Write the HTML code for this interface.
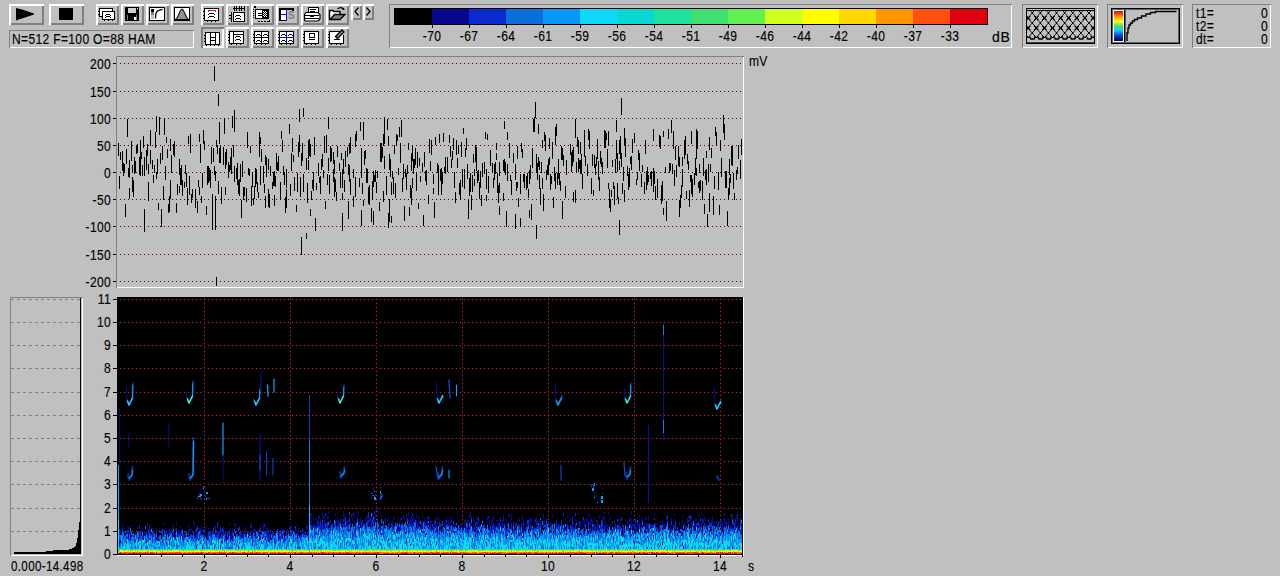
<!DOCTYPE html><html><head><meta charset="utf-8"><style>
*{margin:0;padding:0;box-sizing:border-box}
html,body{width:1280px;height:576px;overflow:hidden;background:#c0c0c0;font-family:"Liberation Sans",sans-serif;color:#000}
.btn{position:absolute;box-shadow:inset 2px 2px #fff,inset -2px -2px #808080}
.prs{box-shadow:inset 2px 2px #808080,inset -2px -2px #fff}
.sk{position:absolute;box-shadow:inset 1px 1px #808080,inset -1px -1px #fff}
.t{position:absolute;font-size:14px;line-height:13px;white-space:nowrap;-webkit-text-stroke:0.15px #000;letter-spacing:0.4px;transform:scaleX(0.86);transform-origin:0 0}
.r{transform-origin:100% 0;text-align:right}
.c{transform-origin:50% 0;text-align:center}
svg{position:absolute;left:0;top:0}
</style></head><body><svg width="1280" height="576" shape-rendering="crispEdges"><rect x="394" y="8" width="594" height="17" fill="#000"/><rect x="395" y="9" width="37" height="15" fill="#000000"/><rect x="432" y="9" width="37" height="15" fill="#08088f"/><rect x="469" y="9" width="37" height="15" fill="#0a2ccf"/><rect x="506" y="9" width="37" height="15" fill="#0a70d8"/><rect x="543" y="9" width="37" height="15" fill="#0a98f8"/><rect x="580" y="9" width="37" height="15" fill="#10d8f8"/><rect x="617" y="9" width="37" height="15" fill="#08d8d0"/><rect x="654" y="9" width="37" height="15" fill="#20e0a0"/><rect x="691" y="9" width="37" height="15" fill="#40e070"/><rect x="728" y="9" width="37" height="15" fill="#60f050"/><rect x="765" y="9" width="37" height="15" fill="#d0ff20"/><rect x="802" y="9" width="37" height="15" fill="#ffff00"/><rect x="839" y="9" width="37" height="15" fill="#ffd800"/><rect x="876" y="9" width="37" height="15" fill="#ff9800"/><rect x="913" y="9" width="37" height="15" fill="#ff5010"/><rect x="950" y="9" width="37" height="15" fill="#e00010"/><rect x="432" y="25" width="1" height="3" fill="#000"/><rect x="469" y="25" width="1" height="3" fill="#000"/><rect x="506" y="25" width="1" height="3" fill="#000"/><rect x="543" y="25" width="1" height="3" fill="#000"/><rect x="580" y="25" width="1" height="3" fill="#000"/><rect x="617" y="25" width="1" height="3" fill="#000"/><rect x="654" y="25" width="1" height="3" fill="#000"/><rect x="691" y="25" width="1" height="3" fill="#000"/><rect x="728" y="25" width="1" height="3" fill="#000"/><rect x="765" y="25" width="1" height="3" fill="#000"/><rect x="802" y="25" width="1" height="3" fill="#000"/><rect x="839" y="25" width="1" height="3" fill="#000"/><rect x="876" y="25" width="1" height="3" fill="#000"/><rect x="913" y="25" width="1" height="3" fill="#000"/><rect x="950" y="25" width="1" height="3" fill="#000"/><defs><pattern id="xh" x="1032.25" y="13" width="8.1" height="10" patternUnits="userSpaceOnUse"><path d="M-0.81 -1 L8.91 11 M8.91 -1 L-0.81 11" stroke="#000" stroke-width="1.0" fill="none"/></pattern></defs><rect x="1026" y="8" width="69" height="36" fill="#000"/><rect x="1027" y="9" width="67" height="34" fill="#c0c0c0"/><rect x="1027" y="42" width="67" height="1" fill="#404040"/><rect x="1027" y="10" width="67" height="1" fill="#000"/><rect x="1027" y="11" width="67" height="27" fill="url(#xh)" shape-rendering="auto"/><path d="M1030.0 37.5 L1031.0 39 L1034.0 39 L1035.0 37.5" stroke="#000" stroke-width="1.6" fill="none" shape-rendering="auto"/><path d="M1038.1 37.5 L1039.1 39 L1042.1 39 L1043.1 37.5" stroke="#000" stroke-width="1.6" fill="none" shape-rendering="auto"/><path d="M1046.2 37.5 L1047.2 39 L1050.2 39 L1051.2 37.5" stroke="#000" stroke-width="1.6" fill="none" shape-rendering="auto"/><path d="M1054.3 37.5 L1055.3 39 L1058.3 39 L1059.3 37.5" stroke="#000" stroke-width="1.6" fill="none" shape-rendering="auto"/><path d="M1062.4 37.5 L1063.4 39 L1066.4 39 L1067.4 37.5" stroke="#000" stroke-width="1.6" fill="none" shape-rendering="auto"/><path d="M1070.5 37.5 L1071.5 39 L1074.5 39 L1075.5 37.5" stroke="#000" stroke-width="1.6" fill="none" shape-rendering="auto"/><path d="M1078.6 37.5 L1079.6 39 L1082.6 39 L1083.6 37.5" stroke="#000" stroke-width="1.6" fill="none" shape-rendering="auto"/><path d="M1086.7 37.5 L1087.7 39 L1090.7 39 L1091.7 37.5" stroke="#000" stroke-width="1.6" fill="none" shape-rendering="auto"/><defs><linearGradient id="cm" x1="0" y1="0" x2="0" y2="1"><stop offset="0" stop-color="#e00010"/><stop offset="0.2" stop-color="#ffa000"/><stop offset="0.35" stop-color="#ffff00"/><stop offset="0.5" stop-color="#40e070"/><stop offset="0.65" stop-color="#10c8f8"/><stop offset="0.82" stop-color="#1040d0"/><stop offset="1" stop-color="#000060"/></linearGradient></defs><rect x="1111" y="8" width="69" height="36" fill="#000"/><rect x="1112" y="9" width="67" height="34" fill="#606060"/><rect x="1113" y="10" width="65" height="32" fill="#c0c0c0"/><rect x="1124" y="10" width="1" height="32" fill="#000"/><rect x="1125" y="10" width="1" height="32" fill="#606060"/><rect x="1113" y="10" width="11" height="32" fill="#fff"/><rect x="1114" y="11" width="9" height="30" fill="url(#cm)"/><path d="M1127 41 V33 H1128 V28 H1129 V25 H1130.5 V23 H1132.5 V21 H1134.5 V19.5 H1137.5 V18 H1141.5 V16 H1146 V14 H1150.5 V12.5 H1155.5 V11.5 H1176.5" stroke="#000" stroke-width="1.4" fill="none" shape-rendering="auto"/><rect x="113" y="63" width="4" height="1" fill="#000"/><rect x="118" y="63" width="624" height="1" fill="#d0b4b4"/><line x1="120" y1="63.5" x2="742" y2="63.5" stroke="#480808" stroke-dasharray="1 3"/><rect x="113" y="91" width="4" height="1" fill="#000"/><rect x="118" y="91" width="624" height="1" fill="#d0b4b4"/><line x1="120" y1="91.5" x2="742" y2="91.5" stroke="#480808" stroke-dasharray="1 3"/><rect x="113" y="118" width="4" height="1" fill="#000"/><rect x="118" y="118" width="624" height="1" fill="#d0b4b4"/><line x1="120" y1="118.5" x2="742" y2="118.5" stroke="#480808" stroke-dasharray="1 3"/><rect x="113" y="145" width="4" height="1" fill="#000"/><rect x="118" y="145" width="624" height="1" fill="#d0b4b4"/><line x1="120" y1="145.5" x2="742" y2="145.5" stroke="#480808" stroke-dasharray="1 3"/><rect x="113" y="172" width="4" height="1" fill="#000"/><rect x="118" y="172" width="624" height="1" fill="#d0b4b4"/><line x1="120" y1="172.5" x2="742" y2="172.5" stroke="#480808" stroke-dasharray="1 3"/><rect x="113" y="199" width="4" height="1" fill="#000"/><rect x="118" y="199" width="624" height="1" fill="#d0b4b4"/><line x1="120" y1="199.5" x2="742" y2="199.5" stroke="#480808" stroke-dasharray="1 3"/><rect x="113" y="226" width="4" height="1" fill="#000"/><rect x="118" y="226" width="624" height="1" fill="#d0b4b4"/><line x1="120" y1="226.5" x2="742" y2="226.5" stroke="#480808" stroke-dasharray="1 3"/><rect x="113" y="254" width="4" height="1" fill="#000"/><rect x="118" y="254" width="624" height="1" fill="#d0b4b4"/><line x1="120" y1="254.5" x2="742" y2="254.5" stroke="#480808" stroke-dasharray="1 3"/><rect x="113" y="281" width="4" height="1" fill="#000"/><rect x="118" y="281" width="624" height="1" fill="#d0b4b4"/><line x1="120" y1="281.5" x2="742" y2="281.5" stroke="#480808" stroke-dasharray="1 3"/><line x1="11" y1="531.5" x2="80" y2="531.5" stroke="#808080" stroke-dasharray="3 3"/><line x1="11" y1="508.5" x2="80" y2="508.5" stroke="#808080" stroke-dasharray="3 3"/><line x1="11" y1="484.5" x2="80" y2="484.5" stroke="#808080" stroke-dasharray="3 3"/><line x1="11" y1="461.5" x2="80" y2="461.5" stroke="#808080" stroke-dasharray="3 3"/><line x1="11" y1="438.5" x2="80" y2="438.5" stroke="#808080" stroke-dasharray="3 3"/><line x1="11" y1="415.5" x2="80" y2="415.5" stroke="#808080" stroke-dasharray="3 3"/><line x1="11" y1="392.5" x2="80" y2="392.5" stroke="#808080" stroke-dasharray="3 3"/><line x1="11" y1="368.5" x2="80" y2="368.5" stroke="#808080" stroke-dasharray="3 3"/><line x1="11" y1="345.5" x2="80" y2="345.5" stroke="#808080" stroke-dasharray="3 3"/><line x1="11" y1="322.5" x2="80" y2="322.5" stroke="#808080" stroke-dasharray="3 3"/><line x1="11" y1="299.5" x2="80" y2="299.5" stroke="#808080" stroke-dasharray="3 3"/><rect x="80" y="298" width="1" height="256" fill="#000"/><path d="M14 552 L46 552 L46 551 L60 550 L68 550 L73 548 L75 547 L77 542 L78 535 L79 525 L80 520 L80 554 L14 554 Z" fill="#000"/><path d="M0.5 0m118 143v13m1 20v13m1 -37v8m2 -9v20m1 -8v13m1 -12v9m1 31v13m1 -68v15m1 -45v18m1 31v9m1 -17v18m0 10v11m2 -58v20m1 4v7m0 5v15m1 -12v17m1 -40v17m1 -13v12m1 -27v8m1 -10v9m2 4v18m1 -35v20m0 -1v17m1 -24v7m1 6v11m1 -40v12m1 9v19m0 33v23m2 -82v20m1 -26v12m1 8v10m0 8v19m2 -71v16m0 4v14m2 -4v9m1 6v8m1 -18v8m1 -41v16m1 -32v16m0 40v7m1 -20v15m1 29v7m1 -93v18m1 18v11m1 45v18m1 -81v14m1 26v14m1 -81v16m1 31v14m1 -43v6m1 6v9m1 46v9m1 -17v16m1 -73v12m0 29v19m1 -44v18m2 -29v11m1 -14v16m2 46v10m1 -29v11m2 -36v16m0 11v7m1 -25v17m1 -20v10m0 -8v18m1 -5v15m0 -14v15m2 -14v6m1 -23v9m1 -1v14m1 1v17m1 -69v8m1 32v19m1 -61v19m1 41v9m1 -14v9m3 -9v19m2 -7v12m1 -33v7m1 -53v8m0 45v8m1 -51v19m1 33v7m1 -30v15m1 -58v14m1 -3v9m2 56v9m1 -49v19m1 -19v17m1 -15v13m1 -11v18m1 -41v17m1 30v36m1 -82v14m1 -96v15m0 85v9m1 -4v10m0 15v34m1 -90v7m0 130v9m1 -141v9m1 -60v12m0 75v13m1 -72v22m0 4v15m1 -18v18m1 24v17m2 -57v18m1 -47v16m1 18v17m0 18v8m1 -46v16m2 -3v16m1 -13v7m1 -15v13m1 -22v20m0 -11v17m1 -58v12m1 17v12m1 -47v22m0 34v16m2 -14v11m1 -16v17m0 -14v19m1 -5v14m1 -15v17m1 -32v18m1 18v18m1 -57v16m1 10v13m1 -13v9m2 -8v14m1 -70v16m1 20v7m1 -6v7m1 -30v7m1 33v20m1 -34v15m1 11v7m1 -19v13m1 -31v19m1 -18v15m1 -2v10m1 0v6m1 -66v18m0 -4v11m1 -20v7m0 22v19m1 -36v13m2 4v17m1 1v9m0 -8v7m1 -37v10m0 31v12m1 -51v20m2 -18v11m0 19v18m1 -13v14m1 -42v10m2 6v7m1 -17v14m1 -15v15m0 9v11m1 -30v11m1 -34v17m1 -8v9m1 -15v15m2 11v18m1 -69v8m1 1v12m1 14v9m1 -3v10m0 -7v10m1 12v16m1 -44v19m0 1v19m3 -84v10m1 50v12m1 -43v18m1 -33v14m1 3v7m1 15v14m2 14v7m1 -39v19m1 -50v15m1 -48v13m0 13v17m1 25v20m1 -44v13m0 71v18m1 -112v18m1 -53v9m0 57v18m3 -34v12m0 63v6m1 -56v20m1 -63v19m0 1v10m1 -31v17m1 -12v13m0 52v7m1 -25v9m1 -20v9m1 -17v17m0 -16v18m1 -54v18m1 63v13m1 -48v7m2 -27v13m1 1v6m1 -7v18m1 -35v11m1 -16v13m1 3v8m1 -42v17m0 -8v7m1 49v8m1 -74v18m1 21v11m1 -68v12m0 29v13m1 4v7m0 -6v18m1 -48v16m1 -14v13m2 -9v12m0 5v13m1 -22v14m0 3v20m1 -18v13m1 0v9m1 -55v11m2 6v8m1 1v16m1 -35v7m1 9v19m0 5v7m0 13v18m1 -72v15m1 6v12m1 -41v16m2 -20v10m1 7v11m0 26v18m1 -76v11m0 11v17m1 -45v16m0 26v16m3 -26v9m0 18v11m2 -73v13m0 30v20m1 -66v10m3 37v9m1 -65v9m1 17v20m0 -9v19m0 32v16m1 -43v11m1 -72v18m0 60v6m1 -55v14m1 -15v9m1 9v15m1 -14v14m1 4v17m1 -19v20m2 3v14m1 -41v19m1 -29v16m0 24v14m1 -50v7m1 -12v12m1 0v11m1 -22v7m2 24v9m1 -68v19m1 -19v19m1 -15v11m1 -24v12m0 45v11m1 -85v27m0 -23v10m0 25v13m2 7v19m1 -76v11m1 6v9m0 68v15m1 -74v16m0 29v23m1 -63v18m1 5v13m0 21v7m1 -52v8m1 -2v17m1 -49v9m1 29v15m1 -64v12m1 -11v6m1 27v7m1 -48v10m1 6v20m1 -43v17m1 41v14m1 -28v15m1 27v15m1 -52v8m1 -4v17m0 -12v12m1 -25v9m1 -31v7m1 57v9m1 -31v12m0 -9v10m1 -45v18m0 17v17m1 -59v15m0 17v10m1 -29v15m1 -15v9m1 -20v17m1 7v19m1 -39v16m1 35v6m1 -51v8m1 10v6m2 -19v9m1 43v11m1 -74v15m1 4v10m1 -11v15m2 10v9m1 -65v14m1 8v10m1 -31v15m2 19v10m0 4v6m1 8v16m1 -81v8m2 18v10m1 -8v18m0 -1v13m1 -61v9m1 26v12m0 -10v10m1 -13v16m0 -4v15m1 -23v12m1 -51v9m1 25v6m1 -16v17m2 -17v15m2 -37v8m1 3v11m1 2v9m1 -17v9m1 -22v12m1 22v16m1 4v11m1 -63v15m1 3v10m1 -23v9m1 29v12m1 -15v20m1 -58v15m1 12v18m1 -59v6m1 35v20m1 -41v9m1 -19v12m1 14v15m1 21v19m1 -41v18m1 -23v19m1 3v15m1 -35v17m1 -38v9m1 6v7m0 3v7m1 -41v17m1 -15v18m0 -3v9m1 0v12m1 -13v11m1 1v17m1 -28v17m1 7v11m1 -43v14m2 -15v12m1 -42v7m1 30v20m0 6v6m1 -67v6m1 36v17m2 -43v16m2 -3v9m1 6v10m1 -24v8m0 -6v14m1 -18v12m1 -31v7m0 3v7m1 13v20m1 -8v18m1 -41v14m0 7v10m0 13v9m4 -55v11m0 22v8m1 -80v8m0 30v13m1 -10v13m1 36v16m1 -95v8m0 24v17m2 -38v15m1 17v6m1 -1v15m2 -42v10m2 1v16m0 34v15m1 -47v9m1 -45v13m0 23v6m1 10v9m2 -33v20m0 24v9m1 -84v9m1 -3v9m1 16v8m1 -8v14m2 -12v14m1 -17v15m1 1v9m1 -28v14m0 26v8m1 -53v14m1 25v16m1 -72v20m1 -49v13m1 -15v15m1 -30v16m1 36v19m0 52v14m1 -76v17m1 -56v10m0 23v10m1 -6v9m0 5v14m1 -1v17m1 -43v11m1 -33v8m0 30v11m1 5v17m1 -79v9m1 -6v16m1 19v10m1 -15v10m1 -16v16m1 -37v11m0 8v8m1 9v16m1 -14v8m1 -42v17m1 38v11m1 -41v14m1 -54v18m0 28v16m1 -65v12m1 37v12m1 -26v20m1 -6v12m1 -4v10m1 -45v14m1 -12v12m0 41v18m1 -64v11m2 20v12m1 -38v15m4 -31v11m1 -3v20m1 -22v16m1 -19v15m0 30v10m2 -83v19m0 52v13m1 -41v11m1 -36v10m1 -7v14m0 4v14m1 -12v9m1 -27v12m0 6v14m1 -20v20m1 0v15m2 -59v16m0 -6v17m1 -1v10m2 -2v12m1 -47v11m1 -9v18m2 29v16m1 -40v12m1 24v6m1 -41v13m1 -4v11m1 -18v9m1 -27v20m1 2v19m1 -3v14m1 -40v13m1 -6v9m1 -5v12m2 -44v18m1 -17v17m1 -15v7m1 9v19m1 -37v14m0 38v6m1 0v19m1 -9v13m1 -22v7m1 -37v7m1 15v7m1 -3v19m1 -46v14m1 -53v12m0 8v19m1 -6v19m0 11v16m1 -2v7m1 -64v14m0 7v9m0 50v15m1 -99v10m0 0v13m1 -61v17m0 38v14m1 16v11m1 -27v14m1 -53v17m0 45v12m1 -64v19m2 9v10m1 -2v16m1 -22v19m1 -30v7m1 -8v14m1 -31v14m2 -20v10m2 36v6m1 -13v8m1 -30v10m1 -7v18m2 3v13m1 -22v7m2 10v12m1 -54v14m1 17v19m1 -23v18m1 -10v7m2 -10v7m1 -8v15m2 -57v12m0 27v11m0 0v13m1 -21v13m1 2v14m2 -21v19m2 -63v12m1 -11v13m1 36v19m1 -23v20m1 -70v6m0 71v7m2 -48v6m1 28v20m2 -92v10m1 24v10m1 -10v8m1 -51v13m1 31v10m1 -43v18m1 21v16m1 -40v14m1 5v12m2 -31v20m1 -9v10m0 33v17m1 -22v13m1 -23v13m1 -41v9m0 3v18m2 -47v19m1 -23v19m0 -18v15m1 39v8m1 -45v10m1 -3v9m1 20v17m1 -32v7m1 -51v13m0 31v19m1 -15v18m2 -24v12m1 -27v17m1 -46v21m0 0v9m0 9v8m1 -45v18m1 33v6m1 -24v9m0 8v12m1 -13v11m2 -10v19m1 -42v18m1 28v10m1 -44v10m1 -29v7m0 11v16m1 29v13m1 -63v13m0 -10v15m1 -45v13m0 43v19m1 -48v8m1 -24v10m2 38v19m1 -39v13m1 -62v9m1 -4v13m2 27v18m1 15v10m1 -75v11m1 7v19m2 -62v18m1 -9v16m1 31v17m1 -17v17m1 23v15m1 -38v11m1 -40v16m0 3v17m1 -21v9m1 -37v19m1 -19v20m1 7v16m1 4v7m2 -30v10m1 -13v7m1 -29v14m2 1v19m1 -40v16" stroke="#000" stroke-width="1" fill="none"/><rect x="117" y="297" width="626" height="258" fill="#000"/><rect x="743" y="297" width="1" height="259" fill="#fff"/><rect x="117" y="555" width="627" height="1" fill="#fff"/><rect x="113" y="554" width="4" height="1" fill="#000"/><rect x="113" y="531" width="4" height="1" fill="#000"/><rect x="118" y="531" width="624" height="1" fill="#220000"/><line x1="120" y1="531.5" x2="742" y2="531.5" stroke="#a03838" stroke-dasharray="1 3"/><rect x="113" y="508" width="4" height="1" fill="#000"/><rect x="118" y="508" width="624" height="1" fill="#220000"/><line x1="120" y1="508.5" x2="742" y2="508.5" stroke="#a03838" stroke-dasharray="1 3"/><rect x="113" y="484" width="4" height="1" fill="#000"/><rect x="118" y="484" width="624" height="1" fill="#220000"/><line x1="120" y1="484.5" x2="742" y2="484.5" stroke="#a03838" stroke-dasharray="1 3"/><rect x="113" y="461" width="4" height="1" fill="#000"/><rect x="118" y="461" width="624" height="1" fill="#220000"/><line x1="120" y1="461.5" x2="742" y2="461.5" stroke="#a03838" stroke-dasharray="1 3"/><rect x="113" y="438" width="4" height="1" fill="#000"/><rect x="118" y="438" width="624" height="1" fill="#220000"/><line x1="120" y1="438.5" x2="742" y2="438.5" stroke="#a03838" stroke-dasharray="1 3"/><rect x="113" y="415" width="4" height="1" fill="#000"/><rect x="118" y="415" width="624" height="1" fill="#220000"/><line x1="120" y1="415.5" x2="742" y2="415.5" stroke="#a03838" stroke-dasharray="1 3"/><rect x="113" y="392" width="4" height="1" fill="#000"/><rect x="118" y="392" width="624" height="1" fill="#220000"/><line x1="120" y1="392.5" x2="742" y2="392.5" stroke="#a03838" stroke-dasharray="1 3"/><rect x="113" y="368" width="4" height="1" fill="#000"/><rect x="118" y="368" width="624" height="1" fill="#220000"/><line x1="120" y1="368.5" x2="742" y2="368.5" stroke="#a03838" stroke-dasharray="1 3"/><rect x="113" y="345" width="4" height="1" fill="#000"/><rect x="118" y="345" width="624" height="1" fill="#220000"/><line x1="120" y1="345.5" x2="742" y2="345.5" stroke="#a03838" stroke-dasharray="1 3"/><rect x="113" y="322" width="4" height="1" fill="#000"/><rect x="118" y="322" width="624" height="1" fill="#220000"/><line x1="120" y1="322.5" x2="742" y2="322.5" stroke="#a03838" stroke-dasharray="1 3"/><rect x="113" y="299" width="4" height="1" fill="#000"/><rect x="118" y="299" width="624" height="1" fill="#220000"/><line x1="120" y1="299.5" x2="742" y2="299.5" stroke="#a03838" stroke-dasharray="1 3"/><rect x="204" y="298" width="1" height="256" fill="#220000"/><line x1="204.5" y1="299" x2="204.5" y2="554" stroke="#a03838" stroke-dasharray="1 3"/><rect x="290" y="298" width="1" height="256" fill="#220000"/><line x1="290.5" y1="299" x2="290.5" y2="554" stroke="#a03838" stroke-dasharray="1 3"/><rect x="376" y="298" width="1" height="256" fill="#220000"/><line x1="376.5" y1="299" x2="376.5" y2="554" stroke="#a03838" stroke-dasharray="1 3"/><rect x="462" y="298" width="1" height="256" fill="#220000"/><line x1="462.5" y1="299" x2="462.5" y2="554" stroke="#a03838" stroke-dasharray="1 3"/><rect x="548" y="298" width="1" height="256" fill="#220000"/><line x1="548.5" y1="299" x2="548.5" y2="554" stroke="#a03838" stroke-dasharray="1 3"/><rect x="634" y="298" width="1" height="256" fill="#220000"/><line x1="634.5" y1="299" x2="634.5" y2="554" stroke="#a03838" stroke-dasharray="1 3"/><rect x="720" y="298" width="1" height="256" fill="#220000"/><line x1="720.5" y1="299" x2="720.5" y2="554" stroke="#a03838" stroke-dasharray="1 3"/><path d="M0.5 0m118 527v2m0 0v3m0 2v2m1 5v3m1 -14v3m0 7v3m1 -12v4m1 -11v4m1 2v2m1 2v2m1 -3v2m1 -5v2m0 0v2m1 -8v2m1 -1v3m0 2v4m0 0v3m1 -13v3m1 3v2m0 0v2m0 0v4m1 -15v2m0 3v2m0 3v2m4 -5v3m2 -9v3m1 8v2m1 -5v2m2 -6v4m0 0v2m1 -8v4m2 1v3m1 -3v2m1 4v4m1 -20v3m0 0v4m0 4v3m1 0v2m1 -14v3m0 0v3m1 -1v3m1 -1v3m2 -7v2m0 0v3m1 -3v3m2 -6v4m0 6v3m1 -3v4m1 -11v2m0 7v2m5 -12v3m1 -9v3m1 3v3m0 0v2m1 -1v4m0 0v3m2 -11v4m0 0v2m1 -6v2m0 0v2m2 -2v2m1 -6v3m1 -5v4m0 6v2m1 -2v2m1 -9v3m0 4v2m1 -15v4m1 7v4m1 -7v3m1 -2v4m1 -9v2m0 2v4m2 2v2m1 0v2m1 -7v3m0 0v2m1 -3v2m2 -5v3m0 5v2m1 -18v4m0 2v2m0 3v2m2 -9v2m1 -1v3m2 -11v4m1 -2v3m0 5v4m1 -6v3m0 0v3m1 -2v2m1 -5v2m0 0v2m1 -6v2m0 0v2m1 -5v4m2 -5v3m3 -1v2m0 3v3m1 -6v4m0 0v3m1 -11v3m1 3v3m0 0v3m1 -10v2m0 0v2m2 -2v2m3 -1v3m1 -9v3m1 -2v3m0 4v4m1 -5v3m1 -5v2m0 0v2m2 -4v2m0 0v2m2 -5v4m2 -6v3m1 1v2m0 0v2m1 1v2m1 -4v3m1 -8v3m0 6v2m1 -7v3m0 0v2m1 -15v3m0 3v2m0 0v2m1 -5v3m0 3v3m0 0v2m1 -7v2m0 0v2m0 0v4m1 -11v3m0 3v3m0 0v3m2 -18v3m1 -3v4m0 0v2m2 -1v4m1 1v3m3 -4v3m0 0v4m1 -15v2m0 6v4m0 0v2m1 -6v2m0 0v3m2 -10v4m0 4v2m1 -7v2m2 -1v3m0 2v2m1 -6v4m1 -12v4m0 2v2m1 -8v2m0 5v2m0 0v3m1 5v2m1 -14v4m1 -5v2m0 0v3m1 -4v4m2 -4v3m1 -2v3m1 -5v2m0 4v2m0 0v2m0 0v3m1 -17v4m0 8v4m1 -9v4m1 -9v2m0 9v2m1 -16v3m0 0v2m0 0v4m2 4v4m1 -16v2m0 3v3m1 -4v2m0 0v3m0 0v2m1 -2v4m2 -5v2m0 0v2m0 0v4m1 -11v2m0 7v2m1 -13v2m0 7v2m1 -4v2m1 -7v3m4 0v2m0 0v4m0 0v3m1 -4v2m2 -10v4m1 -6v4m0 3v2m0 0v3m3 -9v4m0 0v2m1 -7v3m1 -3v2m0 0v2m2 0v3m1 -14v2m1 1v2m0 7v2m2 4v2m1 -16v2m0 2v3m1 -4v3m0 0v3m1 -11v2m0 4v4m1 -3v3m0 0v3m0 0v2m1 -12v3m0 0v4m3 -2v3m1 -3v2m1 -4v4m1 -3v4m2 -9v4m1 -5v4m0 5v2m1 -7v4m0 0v2m0 2v4m1 -16v2m1 -11v2m0 3v2m0 0v2m1 -12v2m0 2v3m0 0v3m0 4v3m1 -4v4m1 -12v4m1 0v4m1 -8v2m1 -1v2m0 0v4m0 0v2m1 -6v2m0 0v2m1 -11v3m0 0v4m0 3v3m1 -11v3m0 4v3m1 -7v2m1 3v2m0 0v3m0 0v3m1 -19v3m1 -1v3m0 0v2m0 0v2m0 3v4m1 -13v2m0 0v3m0 0v3m0 0v4m2 -2v2m1 -12v3m1 -8v3m0 2v4m1 1v3m0 0v4m1 -3v3m5 -14v3m0 2v2m1 -1v3m1 -5v3m0 0v4m1 -5v2m0 3v2m2 -8v2m1 -3v3m2 -10v4m0 0v2m1 -3v4m0 0v3m0 0v4m1 0v2m1 -13v2m0 5v3m0 0v2m1 -6v3m0 0v2m1 -7v4m0 0v4m0 4v2m1 -10v2m1 -2v2m0 0v4m1 -14v3m1 -4v3m0 2v3m1 -8v3m0 0v2m0 3v2m2 -9v3m0 5v2m0 0v3m0 0v4m1 -21v3m1 2v4m1 -8v4m0 4v4m0 0v3m1 -5v4m0 2v3m1 -13v4m0 0v3m0 2v2m1 -8v2m0 4v2m1 -6v3m0 0v2m1 -17v2m0 10v2m1 -1v2m1 -8v4m0 5v3m1 -12v2m0 2v2m1 -8v2m0 0v4m1 -3v2m0 3v4m1 -9v4m1 -1v2m0 0v4m1 -8v3m1 -9v4m0 0v2m0 4v4m2 -16v4m0 2v3m0 0v2m1 -13v3m0 2v4m0 2v2m0 8v2m1 -8v4m0 0v2m1 -19v2m0 3v3m1 8v2m1 -6v2m1 0v3m1 -13v4m0 4v3m1 -6v4m2 1v3m1 -8v2m0 0v3m0 2v2m2 -10v3m1 -6v3m1 2v3m0 0v2m0 0v4m3 -9v3m1 -8v4m0 7v3m1 -5v2m3 -9v3m0 6v4m1 -6v2m0 0v2m0 0v2m1 -10v3m0 3v2m0 0v3m1 -14v4m0 2v3m0 2v2m1 -8v2m2 -10v2m1 2v2m1 11v2m1 -16v3m0 10v2m1 -9v3m1 -15v4m0 3v3m2 -5v3m0 0v2m1 -7v3m0 0v3m0 0v4m0 0v2m1 -8v4m0 0v2m0 2v2m1 -13v4m0 0v4m0 0v2m1 -8v4m2 -7v3m0 2v2m0 0v3m0 0v3m1 -6v3m0 0v4m1 -8v3m0 0v2m1 -6v4m1 2v2m1 -7v4m0 0v4m0 0v3m1 -17v3m0 3v3m0 2v3m0 2v2m2 -16v4m0 0v2m0 4v2m1 -7v4m0 8v3m1 -15v4m0 7v2m1 -18v3m0 0v2m0 0v4m1 -3v2m0 2v2m1 -11v2m0 2v3m1 -4v3m1 -4v4m1 3v2m1 -6v3m0 2v2m1 -10v3m0 0v4m1 -9v3m0 2v2m0 0v3m1 -12v4m1 2v3m1 -9v4m1 -1v4m1 3v4m2 -4v3m1 -9v3m0 8v3m1 -12v4m1 -6v3m1 -6v3m0 3v2m2 -5v3m0 0v3m1 -3v3m0 0v4m0 3v2m0 0v2m1 -20v4m0 0v3m1 -4v3m1 -7v2m0 5v2m0 0v3m1 -4v3m0 4v2m1 -9v3m1 -3v3m1 -2v3m1 -16v3m0 12v4m1 -12v3m1 4v2m1 -5v2m0 0v3m1 -4v4m1 -12v2m0 9v3m1 -3v3m1 -10v4m0 0v4m1 -9v4m0 4v2m1 -8v2m1 -3v2m0 0v2m0 4v2m2 -15v4m0 0v2m1 -9v4m0 0v2m0 4v4m1 -10v3m0 4v3m1 1v4m1 -13v4m0 3v4m1 -9v2m0 3v4m0 0v3m1 -6v4m0 0v2m0 2v3m1 -21v4m1 -2v4m0 0v3m0 0v2m1 -7v4m0 6v3m1 -14v2m0 3v2m1 4v2m1 -15v2m0 8v2m0 0v4m1 -14v2m4 -5v3m0 5v3m1 -9v4m0 0v3m1 2v3m1 -11v4m0 0v3m0 2v3m2 -11v2m0 0v4m1 -9v2m0 0v3m0 0v2m1 -8v4m1 4v4m0 0v2m0 0v3m1 -8v3m1 -8v2m1 1v2m0 0v2m1 -7v4m0 0v3m0 0v2m1 -2v3m1 -13v2m0 2v2m0 0v4m1 -2v2m0 0v2m1 -9v3m0 0v3m0 0v2m1 -13v4m0 5v4m1 -6v3m1 -6v2m0 4v2m0 0v3m1 -10v2m0 13v4m1 -5v2m1 -22v3m0 4v3m1 -10v4m0 6v4m0 3v2m2 -19v3m0 0v3m0 2v2m0 9v2m1 -9v2m2 0v2m0 3v2m1 -13v3m0 3v3m1 -10v3m2 -1v2m1 -7v4m0 2v2m0 7v3m1 -9v3m1 -8v2m1 -9v4m0 0v2m0 9v3m1 -13v2m0 4v3m0 0v3m0 0v2m0 0v4m1 -9v2m1 -4v2m0 0v3m1 -11v4m0 0v3m1 -4v3m1 2v4m1 -15v2m0 0v2m0 0v3m1 -7v3m0 0v2m0 0v3m1 -9v3m0 0v2m0 3v2m3 -6v3m0 0v3m2 -10v3m0 0v3m1 0v2m2 -11v2m0 5v3m0 0v4m0 6v2m1 -16v4m2 8v2m1 -20v4m0 3v4m1 -5v3m1 -5v2m2 1v3m3 -1v2m0 0v2m0 3v3m1 -10v2m1 -12v4m1 7v3m1 -6v3m1 5v3m1 -12v2m1 3v2m2 -3v3m1 5v3m4 -11v3m0 0v3m1 -12v3m1 3v3m0 0v2m0 4v2m1 -19v3m0 2v4m1 0v4m1 -10v4m1 -6v4m0 7v2m2 -5v2m1 -12v3m0 4v2m0 0v2m0 0v2m1 0v2m1 -11v2m1 -1v3m0 2v2m2 -14v2m0 5v4m0 0v4m1 -4v4m1 -6v2m0 0v3m2 -10v2m0 2v3m0 2v3m1 -9v2m1 -3v2m0 0v4m0 5v3m2 -15v3m0 3v3m1 -9v4m0 0v3m1 -12v4m0 14v3m1 -12v3m1 -9v3m0 0v4m0 0v2m1 -6v3m0 0v4m1 -5v3m2 -7v2m0 7v3m1 -4v2m2 -7v2m0 0v2m0 2v2m1 -4v3m0 0v3m0 5v2m1 -22v4m0 9v2m1 -3v2m2 -11v3m1 -5v3m0 5v2m1 -14v2m0 3v3m0 0v4m1 -1v4m0 0v3m0 0v2m1 -8v3m1 -2v3m1 -16v3m0 4v2m0 5v4m1 -5v2m1 -11v4m0 4v2m3 12v3m1 -21v4m1 -2v4m1 0v3m2 -10v3m0 2v2m1 -3v3m1 -8v3m1 12v3m1 -7v2m1 -7v2m1 2v3m0 0v2m1 -14v2m1 6v3m1 -10v4m0 0v3m2 -6v4m1 -8v3m0 3v2m0 3v3m1 -20v4m0 4v2m0 0v2m0 0v3m1 -2v4m1 -8v2m1 0v3m1 4v2m0 0v3m1 -13v2m0 4v3m1 -8v4m0 0v2m0 9v2m1 -20v2m0 2v4m0 0v3m1 -15v4m0 3v3m1 -1v2m0 0v2m0 0v4m1 -12v3m0 0v2m1 -7v2m0 0v2m0 3v3m1 -9v2m1 1v2m0 0v3m0 3v3m1 -16v3m0 7v3m1 -12v2m0 6v3m1 -6v4m0 0v2m0 7v2m1 -22v3m0 0v2m0 7v3m2 -4v2m1 -5v4m2 3v2m1 -20v3m0 6v2m1 -1v3m1 -9v2m1 4v2m0 2v2m2 -4v2m0 0v2m0 0v3m1 -11v3m0 0v2m2 -6v2m0 0v3m0 8v3m0 6v3m1 -21v3m0 0v2m1 -6v2m0 0v4m2 -13v4m0 2v3m1 -6v2m1 0v2m1 -2v3m0 0v2m1 -2v3m0 0v4m1 -13v3m2 -7v2m1 2v2m0 2v4m0 0v3m2 -2v4m1 2v3m1 -8v3m1 -9v3m0 6v2m1 -2v2m1 -11v3m0 0v4m0 3v4m1 -20v2m0 2v3m0 9v2m1 -5v2m0 15v3m1 -24v2m2 -2v2m0 0v3m1 -12v3m1 -5v2m2 1v2m0 0v3m0 0v2m0 0v2m1 -12v3m0 4v3m0 5v3m1 -12v2m2 5v2m1 -14v3m0 0v2m0 3v3m0 0v3m1 -12v2m0 14v3m1 -12v2m1 -14v3m0 8v3m1 -5v3m0 4v2m1 -11v4m0 0v2m1 -14v2m0 8v3m1 -4v2m1 -9v2m0 2v4m1 -6v3m0 13v2m1 -17v3m1 3v2m0 0v3m1 -1v2m2 -9v3m0 6v4m1 -17v2m1 1v3m0 6v2m1 -15v4m0 0v3m1 -1v4m1 -5v2m1 2v4m1 -10v3m0 0v2m0 6v2m2 -5v3m1 -9v3m1 -2v2m1 -3v2m0 0v2m1 -4v4m0 0v3m0 0v4m1 -14v3m1 -8v4m0 2v3m0 0v3m0 0v2m1 -7v4m0 0v2m0 0v2m2 -2v3m1 -10v3m0 0v3m1 -4v2m1 1v4m1 -12v2m0 8v3m1 -15v4m0 5v3m0 0v3m1 -10v3m1 9v2m1 -10v4m1 -12v4m0 2v2m0 2v3m1 -12v2m0 11v4m1 -11v4m1 1v4m1 -17v2m0 14v2m1 -8v2" stroke="#08088f" stroke-width="1" fill="none"/><path d="M0.5 0m118 536v2m0 0v2m1 -11v3m0 0v3m0 3v3m0 3v3m3 -19v4m1 4v3m3 -3v3m0 2v3m1 -14v4m0 3v2m2 -7v2m0 5v2m4 -6v3m1 -4v3m0 3v3m1 -4v2m1 -7v3m2 -6v3m0 5v3m1 -17v4m0 2v3m0 2v3m1 -8v3m0 0v2m0 0v3m1 7v3m1 -13v4m1 -4v2m1 -7v2m1 2v4m1 -7v3m2 -6v3m0 0v2m0 0v3m1 -6v4m0 3v2m1 -7v3m0 2v2m2 -8v4m0 0v3m0 0v4m1 -10v4m2 -2v4m0 0v3m3 -6v3m1 -9v3m0 2v2m0 2v2m1 -10v2m1 -3v4m1 -5v3m0 0v4m0 4v3m1 -8v2m1 -7v4m2 -3v2m0 9v2m3 -11v3m0 5v4m1 -15v4m0 4v2m2 -10v3m0 2v3m1 -6v3m1 2v2m1 -6v2m0 2v3m1 -12v4m2 1v4m2 -3v2m0 0v4m1 -10v4m0 0v2m1 -2v2m0 2v3m1 -7v4m0 2v3m2 -12v4m1 -4v2m2 -1v3m1 -6v2m0 5v3m1 -5v2m1 -2v3m0 0v4m1 -6v4m1 -7v4m0 3v2m1 -6v4m2 -11v3m0 4v3m0 0v3m0 4v4m1 -23v4m0 4v3m0 0v3m1 -1v2m1 -7v2m0 0v4m1 -11v4m0 0v3m0 5v3m2 -14v2m0 13v4m1 -19v2m0 2v3m0 2v2m1 -11v3m0 3v2m2 0v3m0 0v2m0 0v2m2 -13v4m0 0v4m1 -9v3m0 0v2m0 3v3m1 -10v4m0 0v2m1 -3v4m0 0v3m0 0v2m1 -12v2m1 -6v3m1 1v3m0 11v3m1 -20v4m1 2v3m1 -16v3m0 0v3m0 6v3m1 -5v3m0 0v3m0 0v2m1 -6v2m1 -9v3m0 0v3m0 3v2m0 7v4m1 -16v2m0 0v3m1 -10v2m0 0v2m0 3v4m0 2v3m1 -14v3m0 0v3m1 3v3m1 -10v4m0 2v3m1 -2v4m1 -11v4m0 0v2m1 -7v2m1 0v3m0 11v2m1 -10v3m2 -10v3m1 1v2m1 -9v4m0 10v2m3 -11v3m1 -9v3m0 15v3m1 -22v3m0 2v2m0 0v2m0 6v2m1 -12v2m0 0v2m0 0v2m3 -1v4m0 0v2m2 -10v2m1 0v2m1 -6v3m1 0v2m2 -4v4m1 -10v2m0 8v3m1 -4v3m0 0v3m0 2v3m2 -13v4m1 -1v3m1 -3v3m1 -3v2m1 -5v3m1 -6v2m0 15v2m1 -21v3m0 3v2m1 5v3m2 -10v4m1 -14v3m0 4v3m1 -3v3m1 -2v2m0 0v3m0 3v3m1 -8v2m0 0v3m1 -10v3m0 4v3m1 -6v2m0 0v4m0 0v3m1 -13v2m2 1v3m1 -4v2m1 4v3m0 0v2m1 -10v3m0 4v4m1 -13v2m1 -4v2m2 0v4m0 0v2m1 -5v2m0 2v4m0 0v2m1 -9v4m0 0v2m2 -9v3m0 0v2m0 4v4m1 -6v2m0 0v3m1 -4v3m1 -9v2m0 0v3m0 10v2m1 -14v4m2 -12v2m0 10v3m1 -15v3m0 2v4m1 -6v2m0 0v2m1 -3v3m1 3v3m2 -14v3m0 9v2m2 7v2m1 -15v2m1 0v2m0 9v2m1 -14v2m0 0v3m1 -5v2m0 3v3m1 -15v4m1 2v3m2 -5v3m0 0v3m2 -6v2m1 1v2m1 -16v2m0 4v4m1 -17v2m0 9v2m1 -2v2m1 9v2m1 -13v3m1 -2v4m0 0v4m0 0v3m1 -10v2m0 3v3m0 8v2m1 -18v2m0 3v3m1 -10v3m1 -7v3m0 5v3m0 0v3m1 -9v3m0 7v3m1 -18v4m0 0v3m0 0v2m1 14v3m1 -27v3m0 0v4m0 0v2m0 3v2m2 -6v2m1 -17v3m0 7v2m0 2v4m1 -8v3m1 -4v3m0 0v4m1 -1v2m0 2v2m0 0v2m1 -8v2m0 0v4m1 -13v2m0 5v3m1 -7v2m1 -2v2m0 0v4m0 0v4m1 -7v3m1 -6v4m1 -7v3m0 0v2m1 0v4m1 -5v2m0 0v3m1 -8v3m1 -2v3m0 0v4m0 0v3m1 -12v4m1 0v2m1 -4v2m0 9v3m1 -18v3m0 2v3m0 3v3m1 -8v3m1 -11v3m0 0v2m1 20v3m1 -20v2m0 0v4m1 -5v4m1 -18v3m0 3v4m0 7v2m1 -3v4m0 3v3m2 -7v3m0 0v3m0 0v3m1 -6v2m1 -8v3m0 0v3m1 -3v3m0 0v3m0 3v4m0 3v2m2 -30v3m0 4v3m1 -3v4m1 0v4m0 0v3m2 -15v4m0 6v4m1 -16v2m1 2v2m0 5v3m3 -8v4m0 0v3m1 -12v3m0 0v3m1 -15v3m0 0v3m0 2v3m1 8v2m1 -15v3m0 6v3m1 -8v4m0 0v3m1 -10v4m1 -4v3m0 0v2m0 0v2m1 11v2m2 -6v2m0 0v2m1 -29v3m0 8v3m1 9v2m0 0v2m1 -7v3m1 -3v4m0 0v3m1 -7v2m0 3v2m1 -6v2m0 2v2m1 -11v2m0 0v2m0 0v3m0 0v2m0 0v2m0 0v2m2 -19v2m2 7v3m1 -7v3m0 0v3m0 9v3m1 2v3m2 -23v4m1 -3v4m0 0v2m0 0v2m2 -1v3m1 -12v4m1 -2v2m0 4v3m1 -8v2m0 4v3m1 3v2m2 -12v2m1 -11v2m0 8v2m1 -7v2m1 -8v2m0 6v3m0 0v3m1 -4v3m0 0v3m2 -19v2m0 12v3m0 8v4m1 -25v3m1 3v2m0 0v4m0 0v3m0 0v2m1 -13v3m0 0v2m0 3v3m1 -9v2m0 18v2m2 -33v3m0 9v2m0 2v3m3 -12v3m0 4v2m0 0v3m0 0v3m0 0v4m1 -11v3m2 -14v2m0 7v3m1 8v2m1 -11v2m2 -6v2m1 5v2m1 -10v4m0 4v2m2 11v2m1 -20v2m1 -12v3m1 8v3m1 -6v2m0 0v2m0 0v3m1 -2v3m1 -8v3m0 2v2m1 -5v2m0 2v4m1 -7v2m1 1v3m1 -7v3m0 0v3m0 11v2m1 -18v2m0 3v2m0 0v2m2 -13v4m0 3v3m0 0v2m0 3v2m1 -17v3m1 -2v2m1 -5v2m0 0v3m0 3v3m2 -6v2m1 4v2m0 0v3m1 -17v3m0 7v3m1 -9v3m0 2v2m0 2v3m2 5v3m1 -18v2m0 0v2m1 0v2m1 -4v4m1 -11v3m1 3v2m0 2v4m1 -4v2m1 -2v2m1 0v2m1 -7v2m1 -2v3m0 13v2m1 -18v2m0 0v2m0 2v2m2 -6v3m1 4v3m2 -11v3m1 -5v3m0 0v3m1 -9v4m0 2v3m1 -4v2m0 0v3m0 0v3m1 -11v3m0 0v2m1 -5v3m2 9v4m1 -13v3m2 -10v4m1 -4v2m0 2v4m0 0v4m1 -7v2m0 0v3m0 0v4m1 -19v3m1 6v3m0 3v2m3 -8v2m1 -3v2m1 -2v3m0 7v3m1 -10v3m0 2v2m1 -4v2m0 9v2m2 -28v2m0 14v2m1 -1v3m1 -11v4m0 0v3m0 0v2m0 0v4m1 -9v4m0 11v3m1 -21v3m0 0v2m0 0v3m1 -11v3m0 0v2m0 0v2m2 -2v3m0 3v4m1 -12v2m0 3v2m1 -3v2m2 -9v4m0 5v2m1 -15v2m0 10v3m1 -5v3m1 0v3m1 -16v2m0 10v3m2 -4v3m0 0v3m1 -7v3m0 0v3m1 -12v3m0 2v4m1 -3v3m1 -4v3m2 -7v4m0 0v2m1 1v3m1 -12v4m0 3v4m1 -3v3m0 2v2m1 -12v3m1 -4v2m0 3v2m0 0v3m0 2v3m2 -14v2m0 2v2m0 0v3m0 0v3m1 -11v4m1 0v2m0 0v3m1 -11v3m0 6v3m1 0v2m1 -16v4m2 6v2m1 -6v3m1 -11v4m1 -4v2m0 0v4m1 3v3m0 0v4m1 -10v3m0 6v2m1 -10v3m1 -2v2m1 -1v3m0 0v3m1 -8v3m0 2v2m0 0v3m1 -18v3m0 6v3m1 -8v2m0 2v2m1 -8v2m0 2v4m0 3v3m0 2v3m1 -15v2m0 0v2m1 -1v4m0 0v2m0 2v2m1 -14v2m0 4v3m0 0v2m2 -6v3m1 -7v3m1 4v2m1 -10v4m0 0v4m1 -13v4m0 0v4m0 0v3m2 -8v4m1 2v3m2 -6v2m0 0v3m0 0v3m2 0v2m0 0v2m0 0v2m1 -10v4m1 -1v3m1 -13v2m0 0v4m1 -1v2m0 7v2m1 -14v3m0 0v2m0 0v2m1 -4v3m0 0v3m2 -13v3m0 0v3m0 0v3m0 2v2m1 -7v3m1 -16v3m0 12v3m1 -1v2m1 -3v2m0 6v3m2 -15v3m2 1v3m1 -7v3m0 2v3m1 -7v3m1 -11v4m0 0v3m0 2v4m0 0v4m1 -7v3m2 -18v3m0 8v3m0 0v2m1 2v2m0 9v3m1 -17v4m0 0v3m0 0v2m1 -4v2m1 -13v2m0 10v3m1 -7v3m1 0v3m1 6v3m1 -28v3m0 8v3m0 0v2m0 0v2m1 -10v2m0 6v3m1 -12v3m0 0v4m2 1v4m1 -14v3m0 0v2m0 0v2m1 0v4m0 2v3m1 -11v2m0 0v3m0 0v2m1 -3v2m1 -7v4m0 0v2m0 3v2m1 -12v2m1 -3v2m0 3v3m1 -5v4m0 0v3m1 -14v2m1 2v2m0 2v3m1 -1v2m1 -2v3m1 -8v2m0 4v2m1 -13v4m0 0v3m0 0v3m0 0v3m1 -12v4m0 0v4m1 0v2m0 0v3m1 -8v2m0 0v3m0 0v2m1 2v2m1 -5v3m1 -7v2m0 0v3m3 -1v3m1 -6v3m1 -11v3m1 4v3m1 -4v4m1 -5v3m1 0v3m1 -13v3m0 5v2m1 -3v2m0 0v2m1 -4v4m0 0v3m1 -6v2m1 -12v4m0 7v3m0 0v2m1 -8v2m0 8v2m0 5v3m1 -19v3m0 0v2m0 0v2m0 0v3m1 -1v3m3 -11v4m1 -4v2m0 0v2m1 -12v2m0 11v2m1 -9v3m0 3v4m0 0v3m0 9v2m1 -23v4m0 4v2m1 -6v4m1 -10v2m0 7v3m0 4v3m1 -18v4m0 2v3m0 7v4m1 -26v4m0 4v2m0 7v3m1 -9v2m2 0v2m1 -9v4m0 13v2m1 -12v2m0 0v2m1 -9v2m0 0v3m1 0v2m3 4v2m1 -16v2m0 5v3m1 -5v2m0 0v2m0 14v2m1 -25v4m0 9v4m1 -18v2m0 5v2m1 -8v3m1 20v2m1 -24v3m0 2v3m1 -8v3m0 7v3m1 -20v2m1 6v2m0 5v3m0 0v3m1 -12v2m1 0v3m1 -3v4m0 10v2m2 -16v2m1 -4v2m1 -4v3m2 19v2m2 -24v2m0 10v2m1 -24v4m0 2v3m2 4v4m0 0v2m0 0v3m1 -6v3m1 -13v4m0 4v2m0 0v2m2 -8v3m0 11v2m1 -12v3m0 0v4m1 -15v4m0 0v4m0 6v4m2 -12v4m1 0v2m4 1v2m0 6v4m2 -23v2m1 1v3m0 0v3m2 -11v2m0 3v2m0 2v2m1 -12v2m1 -6v3m0 14v4m1 -22v4m0 11v4m2 -10v3m1 -2v2m0 0v3m1 -7v3m2 -3v4m1 -4v3m0 2v4m0 2v2m1 -15v4m0 6v3m1 -8v4m1 -12v3m0 6v3m1 -4v2m0 3v2m1 -14v3m0 9v4m2 -12v3m0 0v3m1 1v3m2 -7v2m0 2v2m1 -13v3m0 18v3m1 -19v4m0 6v2m1 -14v2m0 0v3m1 -4v4m0 0v2m0 2v3m2 -8v3m0 2v3m0 0v2m0 0v3m2 -5v3m1 -3v2m1 -11v4m0 6v2m1 -15v3m0 0v2m1 5v2m1 -14v2m0 2v3m0 6v3m1 -7v3m0 0v2m1 7v3m1 -17v3m0 4v3m3 -15v2m0 5v2m2 -2v2m0 0v3m1 -7v3m0 0v4m1 -6v3m0 3v2m1 -22v2m1 2v2m0 9v2m0 14v4m1 -27v3m0 3v2m1 -7v4m0 0v4m1 -12v4m0 4v3m2 -16v2m0 2v3m0 5v3m3 -11v2m0 0v2m0 0v3m0 7v2m1 -8v3m0 0v3m0 0v3" stroke="#0a2ccf" stroke-width="1" fill="none"/><path d="M0.5 0m118 540v3m0 2v2m1 -12v3m1 -3v3m0 0v2m0 3v3m1 -4v2m1 -12v4m0 3v2m0 0v2m0 0v2m0 0v2m1 -15v4m1 0v2m0 0v2m0 0v3m1 -12v2m0 2v3m0 0v2m0 0v2m1 -8v2m1 -2v3m1 2v2m1 -7v3m0 0v2m0 4v2m1 -17v4m0 8v4m1 -12v3m0 2v4m0 2v3m0 0v3m1 -15v3m0 2v2m1 -8v2m0 3v2m1 -3v3m1 1v2m0 2v4m1 -12v3m1 -5v4m1 -5v3m1 2v2m1 -2v2m1 -5v2m0 0v4m0 0v2m0 0v2m1 -14v4m1 7v3m2 -20v3m0 10v2m0 0v3m0 2v3m1 -4v4m1 -12v2m0 0v3m0 4v3m1 -10v3m1 -7v3m1 -2v2m0 6v2m1 -11v3m0 7v2m2 -7v3m1 -10v4m0 0v3m0 0v4m0 2v3m1 -2v2m1 -16v4m2 6v2m1 -8v2m0 7v3m1 -14v4m0 0v3m0 0v3m1 -3v4m1 -10v4m0 6v3m1 -12v3m0 0v4m0 0v2m1 -12v3m0 8v4m1 -15v4m0 0v2m0 0v3m1 1v2m1 -12v2m0 7v3m1 -9v4m1 -2v2m0 6v2m1 -15v4m1 -5v3m0 0v2m0 3v4m0 0v2m1 -9v3m1 -12v3m0 12v2m1 -3v4m2 -12v2m0 2v3m0 2v2m0 0v3m1 -4v4m1 -12v3m0 0v2m0 3v2m1 -12v3m1 2v3m1 0v3m1 -16v4m1 9v4m1 -9v3m1 -4v3m1 -7v4m2 0v4m0 0v2m1 0v2m1 -9v2m1 5v2m1 -6v3m1 -6v3m1 0v4m1 -5v3m0 0v3m0 0v3m1 -6v2m1 1v2m1 -14v3m0 0v2m0 0v2m1 -8v3m1 2v3m1 -4v2m0 0v4m1 -6v3m1 -1v2m0 4v3m1 -8v4m0 0v2m0 3v2m1 -12v2m1 6v4m1 -3v3m2 -2v2m1 -8v4m1 -1v2m1 -12v3m0 0v3m0 3v2m1 -11v4m1 -1v3m1 4v3m1 -9v3m1 -4v2m1 1v4m0 2v3m3 -11v3m1 -2v2m0 6v2m2 -14v2m0 0v2m2 4v3m0 0v3m1 -6v2m0 0v4m1 -11v3m0 0v3m0 3v2m1 -11v2m1 5v4m1 -9v4m0 2v3m1 -8v3m0 0v3m0 0v2m1 -16v3m0 2v4m1 -3v2m1 -10v3m0 4v2m0 0v2m0 5v2m1 -15v3m0 7v3m1 -10v3m0 0v3m2 -7v4m1 -2v2m2 5v4m1 -6v2m1 -11v4m0 6v2m1 -5v2m1 -6v3m0 0v3m1 -6v2m0 0v2m2 -5v4m0 0v2m1 -4v3m3 -8v3m0 0v3m0 0v3m1 -2v2m0 4v3m1 -10v2m0 0v2m0 0v3m1 -14v4m0 6v4m1 -14v4m0 4v2m1 -3v3m4 -11v3m0 0v3m0 5v2m1 -12v2m0 6v3m1 -9v3m0 0v4m1 -7v2m0 9v4m1 -6v4m1 -3v3m4 -13v4m0 2v3m0 0v3m1 -8v2m0 0v2m1 -6v4m1 -5v3m0 5v3m0 0v3m1 -13v4m0 4v3m1 -9v4m1 -11v4m1 9v2m1 -7v2m0 2v2m0 0v2m0 0v2m1 -15v2m0 6v4m1 1v2m1 -18v3m0 8v3m0 0v2m1 -12v2m0 0v2m1 3v3m2 -8v3m0 3v2m0 0v2m1 -6v3m0 0v3m1 -14v3m0 4v3m0 0v3m2 -16v2m1 4v3m0 5v3m1 -13v3m0 4v3m1 -13v4m1 -2v3m0 4v2m1 -7v3m0 8v3m1 -15v4m0 0v4m1 -3v2m0 0v3m0 0v3m1 -11v3m0 0v3m0 0v3m0 0v4m2 -3v3m1 -12v3m1 -6v3m2 -2v3m2 -3v2m0 6v2m1 -9v2m1 5v3m1 -12v4m1 -5v3m0 0v2m1 -6v2m0 0v2m1 -2v2m0 2v3m2 6v2m1 -20v3m0 3v2m0 0v2m0 6v4m1 -20v3m1 0v2m0 0v2m1 -9v2m0 17v3m1 -20v3m0 7v2m0 6v2m1 -19v4m0 0v2m0 0v2m1 -6v2m0 0v2m1 -7v3m0 2v3m1 -8v3m0 0v2m0 0v2m1 -6v4m0 0v2m0 3v2m1 -16v2m0 4v3m0 0v3m1 -9v4m0 3v2m0 9v3m1 -16v3m1 -14v3m0 5v2m0 4v4m0 0v3m1 -6v4m1 -10v2m1 -7v2m0 0v3m1 7v3m2 -21v4m0 7v4m0 0v3m1 -12v3m0 0v3m0 4v3m0 3v2m1 -2v3m1 -15v3m1 -6v3m0 0v2m0 9v3m1 -9v4m1 -11v4m0 4v2m0 0v2m0 3v4m1 -17v4m1 -6v4m1 -5v3m0 3v3m0 0v3m1 -11v2m0 0v4m0 3v3m0 0v2m0 0v2m0 0v2m1 -24v3m0 2v3m0 0v2m0 0v3m0 2v2m1 -13v4m0 0v2m0 0v3m1 -1v4m0 2v3m2 -19v3m1 5v3m0 7v4m1 -19v3m1 -6v4m0 0v3m0 13v3m1 -20v2m0 0v2m0 0v3m0 2v4m1 -14v2m0 6v4m0 6v2m2 -23v2m0 0v2m0 0v4m0 4v4m0 4v2m0 0v4m1 -20v2m0 15v3m1 -19v2m1 -7v2m2 1v4m1 -5v4m0 0v4m0 6v2m0 0v2m1 -9v3m1 -14v4m0 10v2m1 -12v3m0 0v2m1 -11v3m1 8v2m1 -9v2m0 10v4m0 0v3m1 -20v2m1 4v2m0 3v2m0 3v4m1 -33v4m0 12v2m0 15v3m1 -22v3m0 0v2m0 4v2m0 0v3m1 -24v2m0 7v2m0 0v2m0 0v3m1 -7v3m0 2v4m1 -13v3m0 2v3m0 2v3m1 -5v3m0 8v2m1 -21v3m0 0v3m0 0v4m0 4v3m1 -15v3m0 19v3m1 -7v3m1 -3v4m1 -27v4m0 3v2m0 7v2m0 6v4m0 0v2m1 -23v3m0 9v3m1 -20v3m1 4v3m0 0v3m0 2v2m0 0v3m1 -16v2m0 4v3m0 0v3m1 -1v3m1 -9v4m0 0v3m0 3v3m0 0v3m1 -17v2m0 14v2m2 -19v2m0 0v2m1 -5v3m0 0v3m0 0v4m0 0v3m1 -1v3m1 -12v2m0 0v3m1 -8v4m1 1v4m0 8v2m1 -20v4m0 6v3m0 0v3m0 4v3m1 -26v2m1 6v3m1 -10v3m0 5v2m1 1v3m1 -13v3m0 2v4m0 0v3m0 0v2m1 -14v2m0 0v2m0 16v4m1 -16v3m0 0v2m1 -14v3m0 6v4m1 -15v2m0 0v3m0 0v3m0 7v2m0 2v3m1 -19v3m0 5v2m0 2v2m0 4v3m1 -25v3m0 3v2m2 -2v3m0 10v3m1 -17v3m0 0v3m1 4v2m0 4v3m1 -6v3m1 -16v2m0 0v3m0 0v2m0 6v3m0 2v2m0 0v3m1 -27v4m0 0v3m0 0v3m0 0v2m1 -11v4m1 8v2m1 -8v3m0 0v3m0 3v4m1 -9v2m1 -8v3m0 3v4m0 2v3m1 -21v3m0 9v4m1 5v3m2 -23v4m0 0v3m0 0v2m0 2v3m0 0v3m0 8v2m1 -16v2m1 -9v2m0 0v3m1 -5v3m1 -1v3m0 0v2m0 3v4m1 -19v2m0 2v2m0 2v2m0 0v3m0 10v2m1 -16v4m0 0v2m0 0v3m1 -3v2m0 2v2m0 0v4m2 -12v2m1 1v2m0 8v2m1 -20v4m0 0v3m0 0v4m0 0v3m1 -22v2m0 5v2m0 15v2m1 -15v4m0 0v2m0 3v2m1 -7v2m1 -12v2m0 0v3m0 0v3m0 3v4m0 3v2m1 -11v3m0 2v3m0 3v3m1 -19v4m1 -2v3m0 0v2m1 -3v4m1 -11v4m0 5v4m1 -12v4m1 -2v2m0 5v3m0 0v2m1 -17v3m0 0v2m2 -4v4m1 0v3m1 0v4m1 -12v2m0 0v3m0 2v3m1 5v3m0 3v3m1 -22v2m0 0v2m1 15v3m1 -22v2m0 6v2m0 6v3m1 -23v2m0 3v3m0 8v4m2 -18v3m0 8v2m0 0v3m1 -10v4m0 3v3m1 -5v2m1 -10v4m0 4v3m1 2v2m1 -13v4m0 0v3m1 -7v3m2 -10v4m0 6v2m1 -2v2m0 3v2m2 -17v3m0 5v3m0 0v3m1 -8v2m0 0v2m0 2v3m1 -19v4m0 8v2m0 12v2m1 -16v3m1 -2v4m0 7v3m1 -14v3m0 0v4m0 0v3m0 0v3m0 0v4m1 -17v2m1 0v4m0 0v3m0 4v2m1 -11v2m0 0v3m1 -8v4m0 0v4m1 -7v2m0 5v4m1 -19v4m0 6v3m1 -6v3m1 -15v2m0 5v4m0 0v3m0 3v2m0 6v3m1 -22v2m0 13v2m1 -13v4m0 3v3m1 -10v2m0 8v2m1 -14v2m0 7v2m0 4v3m1 -22v4m0 3v3m1 -1v3m0 2v3m1 -11v2m0 3v2m0 0v2m3 -6v3m1 6v4m2 -16v3m0 13v2m1 -21v3m1 -4v3m0 2v2m0 7v3m1 -15v2m0 0v2m0 0v3m0 0v3m0 3v3m1 -15v2m0 2v4m0 0v3m1 -7v2m0 0v3m0 0v3m2 -14v4m1 2v2m0 0v2m1 -13v3m0 0v3m0 4v2m1 -1v3m0 2v4m2 -7v4m1 -18v2m0 0v3m0 3v2m1 -1v4m0 0v3m1 -4v4m0 2v4m0 0v3m1 -11v2m0 2v3m1 -8v2m1 -13v3m0 16v2m2 -16v3m0 4v2m1 -6v2m1 -10v4m0 4v3m0 0v2m1 -12v2m2 6v2m0 0v2m1 -12v4m0 0v2m0 5v4m0 3v2m1 -7v2m1 0v3m1 -14v2m1 6v4m1 -8v3m0 0v2m0 3v4m1 -20v3m1 -4v3m0 6v2m1 3v3m1 3v3m2 -23v2m0 2v3m0 0v2m0 0v2m0 0v3m1 -2v4m1 -12v2m1 6v2m0 4v3m0 0v2m1 -20v3m0 3v2m0 0v2m1 -10v3m1 -9v2m0 4v3m0 11v2m1 -4v2m1 -25v2m0 6v4m1 3v3m0 9v4m1 -28v4m0 9v2m0 9v4m1 -2v2m1 -24v2m0 2v3m0 2v2m0 0v3m1 -4v4m1 -9v2m0 0v2m0 0v4m1 -14v3m0 0v2m0 18v2m2 -16v4m1 -10v3m0 6v4m1 -5v4m0 6v4m1 -25v4m0 0v3m0 0v3m1 -5v2m0 14v4m1 -23v3m0 4v2m0 4v4m1 -8v2m1 -9v2m0 3v3m1 -4v4m1 -5v4m1 -2v3m0 0v3m0 0v2m0 0v2m2 -10v3m0 9v4m1 -18v3m1 -3v3m0 0v2m1 -4v3m1 -11v3m0 6v4m1 -6v2m0 2v2m0 4v3m1 -16v3m0 0v4m1 -3v2m1 0v3m0 0v3m1 -7v2m0 3v3m1 -12v3m0 0v4m0 6v2m0 2v3m1 -14v3m1 9v2m1 -19v3m0 3v2m1 -4v2m0 0v4m1 -17v2m0 4v2m2 -3v2m0 8v3m1 -9v2m1 6v3m1 -13v3m0 3v2m0 8v3m1 -20v2m0 0v3m0 0v4m1 -3v3m0 6v2m2 -15v3m0 8v3m1 -12v3m0 11v2m2 -9v3m1 -10v2m0 3v4m1 3v2m2 -23v2m0 6v3m0 2v2m0 0v2m1 -11v4m0 0v3m1 -2v4m0 2v2m2 -12v4m0 3v3m0 0v2m1 -12v3m1 -2v3m0 2v3m0 0v2m0 0v3m0 2v2m1 -24v3m0 5v3m0 0v2m0 0v2m1 -11v2m0 2v2m0 0v3m1 -5v3m0 0v3m1 -10v2m0 0v3m0 7v3m1 -6v2m0 0v2m0 0v4m1 -9v2m1 -7v3m0 2v3m1 -5v2m1 1v2m1 -10v4m0 5v3m2 -12v2m1 0v3m0 0v2m0 6v2m1 -18v3m1 1v2m0 3v2m0 3v2m1 -12v2m0 4v2m0 7v3m1 -17v2m1 2v2m0 0v2m0 5v2m1 -22v2m0 2v3m0 4v3m0 8v2m1 -3v3m1 -16v3m1 -7v3m0 9v4m3 -9v2m1 -5v2m0 6v3m1 -19v2m0 2v3m0 3v2m0 0v3m1 -6v4m1 -3v2m0 5v3m1 -14v3m1 0v3m4 -7v3m2 1v2m1 -4v2m0 7v2m1 -23v2m0 19v2m1 -2v3m1 -12v3m1 1v4m1 -1v3m0 0v2m0 0v2m1 -24v3m0 3v4m1 -6v3m0 7v2m0 2v3m1 -16v3m0 3v4m0 0v2m0 0v2m1 -1v3m1 -14v2m0 7v4m0 5v2m3 -24v2m0 0v3m0 5v2m1 -5v2m0 0v2m0 2v2m1 -12v2m0 0v4m0 0v4m0 0v3m1 -8v3m1 2v2m1 -16v4m0 0v2m0 0v3m0 12v4m1 -21v3m0 0v2m1 -2v4m0 4v2m1 -5v3m1 8v2m1 -17v3m0 0v4m0 6v2m1 -21v3m0 5v2m0 6v4m1 -21v2m0 4v2m0 4v2m1 -9v3m0 5v2m0 0v2m1 -13v3m0 4v4m1 -11v3m1 -1v3m1 -3v3m0 0v3m0 2v3m1 -11v3m1 0v4m2 -4v2m0 0v4m0 0v3m1 -7v2m1 -8v3m0 0v3m0 2v2m0 6v3m1 -21v3m0 10v3m2 -13v4m0 10v4m1 -18v3m0 0v2m0 0v4m2 -5v3m1 3v2m1 -14v2m0 4v4m0 0v2m0 3v3m1 -18v3m1 -2v2m0 4v2m1 -13v4m0 2v3m0 0v2m0 0v4m1 -10v2m1 0v4m0 0v3m0 3v3m0 0v4m1 -19v2m0 0v2m0 0v2m0 2v2m1 -1v4m1 -19v4m1 1v4m1 -5v2m0 4v4m2 8v3m1 -28v4m0 5v3m0 8v2m1 -12v3m1 -3v3m0 3v4m0 0v2m1 -13v2m0 0v3m1 -3v2m1 -6v3m0 8v3m0 5v2m1 -4v2m1 -17v3m0 7v2m1 -14v3m0 2v3m0 0v4m1 -5v4m1 -13v3m0 0v2m0 3v3m0 4v2m1 -6v4m0 4v4m1 -23v4m0 9v3m1 -13v4m0 6v2m1 -9v2m0 0v3m0 10v2m1 -24v2m0 0v3m0 0v2m0 2v2m0 7v2m1 -6v2m0 6v2m1 -14v2m2 -11v3m0 0v3m0 0v3m0 3v3m1 6v2m1 -23v3m0 0v4m0 3v4m1 -11v3m0 5v2m0 4v3m1 -14v2m1 -5v3m0 11v3m1 -16v2m0 0v4m0 0v3m0 0v4m0 3v3m1 -22v3m0 4v2m0 0v2m0 0v3m0 3v3m3 -13v3m0 0v4m2 -14v2m0 0v3m1 -4v3m0 0v3m0 0v3m0 0v4m1 -15v3m0 2v3m1 -2v2m0 11v4m1 -24v4m0 9v3m0 6v2m1 -15v2m0 10v3m1 -9v3m1 -14v3m0 12v2m1 -26v3m0 11v4m0 0v3m1 -11v2m0 0v3m1 4v3m2 -11v3m0 0v3m0 5v3m0 2v2m2 -19v3m0 0v2m0 0v4m1 -2v3m0 6v3m1 -24v3m0 6v4m1 -18v4m0 11v4" stroke="#0a70d8" stroke-width="1" fill="none"/><path d="M0.5 0m118 543v2m1 2v2m1 -3v3m1 -14v4m0 0v3m1 -6v3m0 8v2m1 -10v3m0 0v4m2 -4v4m0 0v3m1 -10v2m0 5v3m2 -8v2m1 -2v2m0 2v2m1 0v2m1 -8v2m1 -6v2m0 2v3m0 0v2m0 0v3m1 -9v2m0 0v3m0 2v2m1 -6v3m0 0v3m1 -14v4m1 8v2m1 -17v3m0 4v4m0 0v4m0 0v2m1 -4v2m0 0v2m1 -6v2m3 -1v3m0 0v2m2 -13v3m0 2v3m0 0v2m2 -11v4m0 4v2m2 -3v4m1 -2v3m0 0v2m1 -9v4m1 -15v3m0 6v3m0 0v4m0 2v2m1 -6v4m1 -10v3m0 5v2m0 0v2m1 -5v2m1 -4v3m1 -5v3m0 0v4m0 0v2m1 -6v3m0 0v3m1 -8v2m0 4v2m2 -4v4m1 -10v3m0 4v3m1 -6v3m2 -9v4m0 2v2m1 -2v2m0 0v4m1 -9v2m1 -6v2m0 0v2m0 0v3m0 3v3m1 -2v2m1 -13v3m1 3v2m0 0v2m2 -5v4m0 0v4m1 -9v4m0 2v3m1 -10v4m2 -11v3m0 2v2m0 3v2m1 -1v2m2 -7v3m0 0v4m0 0v4m1 -6v2m1 -4v2m0 3v3m1 -8v3m0 0v3m0 0v2m2 -8v4m0 0v2m0 0v2m1 -6v2m0 0v4m1 -12v4m0 0v2m0 0v2m1 -8v3m3 -2v4m1 -1v2m0 2v2m1 -5v2m1 -3v2m0 0v3m1 -1v4m1 -2v2m1 -6v2m3 -5v2m0 0v3m1 -6v2m1 0v4m2 1v3m2 -10v3m0 0v4m2 -6v2m0 0v2m0 0v2m1 -6v2m0 0v2m0 3v2m1 -13v3m0 3v3m0 0v2m1 -9v3m2 6v2m1 -7v2m1 -9v2m0 6v3m1 -9v2m0 0v2m1 0v4m0 2v2m1 -10v3m1 2v2m2 -8v3m0 0v2m0 0v2m1 -2v3m2 -10v3m1 3v3m0 0v2m0 0v2m1 -8v3m0 2v3m3 -5v3m1 -11v2m0 2v3m1 -1v3m1 -1v2m2 -4v3m2 -3v3m0 0v2m1 -7v4m1 -1v4m1 -11v4m0 4v2m1 -6v2m0 5v2m1 -9v3m1 -4v3m0 4v3m1 -11v2m0 0v2m0 0v3m1 0v2m1 -9v4m0 4v3m1 -12v4m0 5v3m2 -8v2m0 0v2m1 -7v3m0 0v2m2 -7v2m0 3v3m0 0v2m1 -3v2m0 0v2m0 0v2m2 -7v3m0 0v2m1 -10v3m0 2v4m2 -7v3m0 4v3m1 -11v2m0 4v3m0 0v2m1 -7v2m0 0v2m0 0v3m1 -8v3m1 -1v4m1 -12v4m0 0v2m2 2v2m1 -4v2m0 0v2m0 0v4m1 -9v2m0 0v3m1 -8v3m0 7v2m1 -9v2m0 0v2m1 0v2m1 -3v2m0 0v2m1 -7v4m0 3v2m2 -7v3m0 0v4m4 -16v3m0 0v2m0 4v2m0 3v2m1 -14v3m0 0v3m0 4v2m0 0v2m1 -8v3m1 -3v2m1 3v3m1 -4v2m1 -8v3m2 3v4m1 -13v2m0 3v3m0 2v3m1 -9v3m1 -4v2m1 -5v4m0 6v3m1 -13v3m1 -3v3m0 4v3m2 -9v4m0 3v2m0 0v3m1 -7v2m1 -8v4m1 0v3m0 0v3m1 -4v2m3 -6v3m0 0v4m0 0v2m1 -7v2m1 1v2m1 -8v3m0 0v2m0 2v2m0 0v3m1 -12v4m0 0v3m0 0v2m0 0v3m1 -11v2m0 7v2m1 -11v2m0 0v3m0 0v2m1 -6v4m0 2v2m1 -2v2m0 0v2m1 -8v2m0 3v3m1 -11v4m0 2v2m1 -19v4m0 12v3m1 -16v2m0 4v4m0 3v3m0 0v3m1 -19v2m0 0v2m1 -6v3m0 0v2m0 0v3m0 0v3m0 0v3m0 0v4m0 0v3m1 -12v4m0 2v2m0 0v2m3 -11v3m0 0v3m0 0v2m1 -7v3m0 0v4m2 1v2m0 0v2m1 -13v2m0 9v2m1 -12v3m0 7v2m1 -11v3m0 3v2m1 -10v3m1 -2v4m0 0v3m0 3v2m1 -17v3m0 2v3m0 0v2m1 -13v2m0 0v2m0 3v2m0 0v2m0 0v2m1 1v4m1 -13v3m0 4v3m0 0v2m0 0v3m1 -16v2m0 0v4m0 0v3m1 -9v2m0 7v2m1 -10v2m0 0v2m1 -4v2m0 3v3m0 5v2m1 -21v3m0 7v2m1 7v2m1 -19v3m0 0v2m0 0v2m0 2v3m1 -9v3m0 0v3m1 -7v2m0 2v2m0 6v3m0 0v2m1 -16v2m0 4v2m0 4v4m1 -24v3m0 4v4m0 11v2m1 -22v3m0 12v2m0 0v3m0 0v2m1 -17v2m0 6v3m0 0v2m0 0v4m1 -10v3m1 -8v3m0 9v3m1 -14v2m0 10v2m1 -14v3m0 7v2m0 0v2m1 -18v3m1 -2v3m0 0v3m0 3v3m0 0v3m1 -20v2m0 2v4m0 7v3m0 0v2m2 -17v2m0 0v3m0 2v3m0 0v2m0 0v3m0 0v4m1 -2v2m1 -4v4m1 -11v4m1 -5v3m0 4v3m1 -8v4m1 -21v4m0 5v2m0 3v2m0 6v2m1 -14v4m0 4v3m0 0v3m0 0v3m1 -12v2m0 4v3m1 -15v2m0 0v2m0 0v2m0 0v3m0 0v2m0 0v3m1 -9v2m0 0v3m0 2v4m0 0v2m1 -14v2m0 0v4m0 4v2m1 -21v3m0 0v2m0 11v3m0 0v4m1 -20v3m0 9v3m0 0v3m1 -10v2m1 -6v3m0 2v2m0 0v3m0 3v3m1 -22v3m0 0v4m0 6v2m1 -13v4m0 0v4m1 -9v3m0 9v3m0 0v2m1 -15v2m0 2v3m0 2v3m1 -11v2m0 0v3m0 3v4m0 0v3m1 -14v4m1 6v2m1 -15v2m0 4v2m0 7v3m1 -22v2m0 11v3m0 3v2m1 -9v4m0 2v3m1 -14v4m0 3v4m0 3v3m1 -20v2m0 11v2m1 -13v4m0 0v2m0 0v3m0 0v2m1 -7v3m1 1v2m1 -10v2m0 13v3m1 -12v2m0 5v2m1 -12v2m0 11v2m1 -12v2m0 0v4m1 -17v4m0 0v3m0 0v3m0 3v2m2 -10v4m0 6v4m1 -15v4m0 0v4m0 0v2m0 6v3m1 -17v2m0 3v3m0 3v3m0 0v3m1 -9v3m1 -9v3m0 0v2m0 3v3m0 0v2m1 -8v3m1 -2v3m0 0v4m1 -21v4m0 8v3m2 -7v3m0 0v3m0 6v3m1 -10v3m0 0v3m0 0v4m1 -15v3m0 0v3m1 -2v2m0 0v2m0 0v2m1 -5v2m1 -12v3m0 2v2m0 0v2m1 -7v2m0 5v2m1 -3v2m0 0v3m0 0v2m1 -14v2m0 2v3m0 10v2m2 -20v4m0 3v2m0 3v3m0 0v3m0 0v2m1 -14v3m1 -1v3m1 -8v2m0 0v3m0 0v2m0 0v2m1 -14v2m0 0v3m0 0v4m1 -4v3m0 0v4m1 -2v2m1 -5v3m0 6v4m2 -16v4m0 4v2m0 2v2m0 0v2m1 -5v4m1 -17v4m0 2v2m0 7v3m1 -17v3m0 14v2m1 -8v2m1 -11v2m0 0v4m0 0v4m0 3v2m1 -18v2m0 2v3m0 3v4m0 3v3m1 -10v3m0 3v2m1 -18v2m0 4v3m0 2v4m0 3v2m1 -18v3m0 12v3m1 -20v4m0 6v3m0 0v2m0 2v3m1 -16v3m0 4v4m1 -10v4m0 0v4m0 0v2m1 -5v3m0 0v3m0 2v2m1 -18v2m0 0v3m0 10v3m1 -17v4m0 0v3m0 5v2m0 0v3m1 -18v3m0 8v2m1 -10v3m2 -4v2m0 0v4m2 -1v3m0 0v3m1 -10v3m0 4v3m0 2v3m1 -6v3m1 -12v2m0 0v4m0 4v3m1 -10v3m0 3v4m0 0v2m1 -17v2m0 4v3m0 4v4m1 -15v2m0 4v3m0 0v3m0 0v3m1 -17v2m0 0v2m0 0v3m0 0v4m0 2v2m1 -5v4m1 -13v4m0 6v2m1 -18v2m0 7v2m0 3v4m1 -13v4m0 0v3m0 7v3m1 -12v4m0 3v2m1 -16v3m0 4v2m0 0v2m0 5v3m1 -9v3m0 3v3m1 -17v3m0 0v2m0 0v3m1 -4v2m0 3v4m0 0v4m1 -20v2m0 6v2m1 -10v2m0 2v2m0 2v3m0 6v3m1 -16v3m0 10v3m1 -18v2m0 2v3m1 -8v2m0 0v4m0 5v2m0 4v2m1 -14v3m0 3v3m1 -12v2m0 7v2m0 0v2m0 0v4m1 -17v4m0 9v2m1 -14v4m0 0v4m0 5v3m1 -7v3m1 -17v2m0 8v2m1 -8v3m0 0v3m1 -3v2m0 3v2m0 2v2m1 -11v3m1 -1v3m0 0v3m1 1v2m0 0v3m1 -16v2m1 -9v2m0 0v3m0 2v2m0 0v3m0 3v4m1 -3v4m0 0v3m1 -13v3m0 7v3m2 -12v2m0 0v3m0 0v2m0 0v2m1 1v2m1 -8v2m0 0v2m1 -18v3m0 11v2m0 3v3m1 -10v2m1 -9v4m0 3v2m1 -17v3m0 9v3m0 4v4m1 -3v2m1 -17v3m0 0v3m0 5v2m0 4v3m1 -21v3m0 13v2m0 0v3m2 -16v3m0 0v2m1 -9v3m0 6v3m0 2v3m1 -16v2m1 8v2m0 0v3m2 -12v4m0 0v2m0 0v3m0 0v2m0 3v2m1 -12v4m0 2v3m1 -16v3m0 0v3m0 4v3m1 -10v4m0 8v4m1 -11v3m0 0v4m1 -12v3m1 -2v3m0 10v2m1 -10v3m0 3v4m1 -5v3m0 0v2m1 -7v2m1 -12v2m0 6v2m0 5v2m1 -14v3m1 -10v3m0 7v4m0 0v3m1 -14v4m0 4v2m0 0v2m0 0v2m1 -6v2m1 -2v2m0 0v3m0 3v2m1 -17v2m0 8v3m0 0v2m1 -10v2m0 0v4m0 0v3m0 0v3m2 -20v3m0 0v4m0 4v2m1 -12v3m0 2v3m0 7v4m1 -10v4m0 0v2m1 -12v3m0 6v3m1 -8v2m0 0v3m0 2v3m0 0v2m1 -15v2m0 0v2m0 2v3m1 -4v2m2 -4v3m0 0v3m0 3v3m1 -19v3m0 3v4m0 4v2m1 -7v3m1 -6v2m1 6v3m0 0v2m1 -11v4m1 -9v3m0 0v3m1 -5v3m0 6v2m1 -14v4m0 5v3m1 -13v2m0 0v4m0 0v2m0 5v3m1 -13v2m0 9v2m0 0v3m1 -13v4m0 3v3m1 -15v4m0 2v2m1 -9v3m0 6v2m0 0v2m0 3v3m1 -5v3m0 0v2m1 -14v3m1 5v2m1 -14v3m0 6v2m1 -10v3m0 4v3m0 0v3m1 -10v2m0 8v4m1 -13v2m0 0v3m2 -6v4m0 4v3m1 -10v2m0 0v3m0 2v2m1 -9v2m0 0v3m0 0v2m0 0v2m1 -12v4m0 0v3m0 4v3m2 -8v2m0 2v4m0 0v2m1 -11v3m0 0v2m1 -14v3m0 0v4m0 0v3m0 4v4m1 -15v2m0 3v4m0 0v2m1 -6v4m0 6v2m1 -16v3m0 4v3m0 0v3m0 0v3m1 -16v2m0 7v3m1 -11v2m0 3v2m0 5v3m1 -6v2m1 -21v2m0 9v2m0 0v2m1 -2v3m0 6v3m1 -19v3m1 -4v3m0 10v2m1 -6v4m0 2v2m1 -3v3m0 0v3m1 -23v3m0 0v3m0 6v2m0 0v2m0 0v3m1 -9v3m0 0v4m1 -14v2m0 6v2m0 0v2m1 -16v3m0 8v2m0 0v2m0 0v2m0 2v3m1 -12v3m0 0v3m0 5v3m1 -18v2m1 4v4m0 5v3m1 -11v4m1 -13v3m0 2v4m0 0v4m0 5v2m1 -17v2m1 1v3m0 3v4m0 0v2m0 0v2m1 -13v4m0 0v2m1 5v2m1 -18v4m0 7v3m1 -12v3m0 8v3m0 0v2m1 -20v2m0 0v3m0 6v3m1 -10v3m0 0v2m0 7v4m1 -12v3m1 -10v3m0 2v3m0 6v3m1 -19v2m0 13v2m0 0v4m1 -12v3m0 5v4m1 -8v3m1 -6v2m0 0v2m0 3v4m1 -11v3m0 0v3m1 -8v3m0 8v2m1 -15v4m0 0v2m0 0v2m0 3v4m1 -20v4m0 5v3m0 0v3m0 0v3m1 -11v4m0 6v3m1 -20v2m0 3v2m2 -2v4m0 0v4m1 -9v2m0 0v2m0 4v2m0 2v4m1 -8v2m2 -11v3m0 4v2m1 -7v2m0 4v2m0 0v2m0 2v3m1 -14v3m0 8v3m1 -15v2m0 3v3m1 3v2m1 -2v4m1 -11v3m0 2v2m1 1v3m1 -15v3m0 0v4m1 -7v4m0 8v3m1 -8v2m0 0v2m1 -5v2m0 0v3m1 -1v3m1 -14v3m0 4v4m0 2v3m1 -12v2m0 7v3m1 -22v3m0 0v4m0 0v2m0 2v3m0 0v3m0 0v2m0 0v3m1 -14v3m0 0v3m0 0v3m0 2v3m1 -12v3m0 5v4m1 -15v2m0 0v4m0 4v3m1 -4v2m0 0v2m1 -14v4m0 4v2m1 -9v2m0 5v4m1 -13v4m0 4v2m1 -3v3m0 2v3m1 -17v3m0 0v3m0 8v2m1 -10v2m0 0v4m0 0v3m1 -10v2m0 2v2m1 2v3m2 -5v2m0 4v2m1 -11v3m1 -14v2m0 3v3m0 5v3m1 -13v4m0 4v3m0 0v2m0 4v2m1 -12v3m1 -6v2m0 2v2m0 0v2m0 4v3m1 -24v3m0 9v2m0 0v2m1 -3v2m0 0v4m1 -8v2m0 0v2m1 -6v2m0 0v4m1 -4v2m0 0v2m0 6v3m1 -12v4m0 4v4m1 -10v3m0 0v2m0 2v3m1 -15v4m0 0v3m0 5v3m1 -17v3m0 0v2m1 -3v3m0 0v4m0 5v3m2 -7v3m1 -13v2m0 3v2m1 -5v3m0 0v4m0 0v4m1 -16v4m0 0v3m0 7v4m0 0v2m1 -8v3m1 -11v2m0 0v3m1 -4v4m0 7v2m2 -14v4m0 4v3m0 0v3m1 -15v3m0 5v4m0 3v2m1 -20v3m0 4v2m0 4v3m1 -4v4m0 0v2m1 -19v2m0 10v3m1 -3v2m1 -9v3m0 7v2m1 -6v3m0 0v3m2 -13v4m0 3v2m0 3v3m1 -14v3m0 0v4m0 5v2m1 -8v3m1 -11v3m0 5v3m1 -13v2m0 2v2m0 11v3m1 -13v2m1 -6v2m0 0v2m0 4v3m1 -1v2m1 -15v2m0 3v3m0 0v2m0 6v2m1 -20v4m1 -7v4m0 0v3m0 15v3m2 -12v3m0 5v4m2 -11v3m1 -5v2m0 2v3m0 0v3m1 -15v4m1 1v3m0 0v2m1 -2v3m1 -2v4m0 3v2m1 -18v2m0 3v2m0 0v4m0 0v4m1 -13v2m0 3v2m1 -7v4m0 0v4m0 2v3m0 0v3m1 -16v2m0 6v3m1 -6v3m0 3v2m1 -8v2m2 -8v4m0 0v4m0 4v3m0 0v2m2 -13v2m0 5v2m0 0v2m0 0v2m1 -21v2m0 6v3m0 6v4m1 -21v3m0 0v2m0 11v3m0 0v2m2 -11v2m0 0v4m1 -6v2m0 7v2m1 -22v2m0 0v3m0 0v2m0 0v3m1 -4v2m0 0v4m0 4v3m1 -12v3m0 0v4m0 4v2m0 0v2m1 -4v4m1 -11v3m1 -5v3m0 2v2m1 -1v3m1 -13v2m0 2v3m1 6v4m1 -9v2m0 4v3m1 -8v2m1 -12v3m0 13v2m1 -20v4m0 8v4m2 -12v3m0 0v3m0 2v2m1 -2v4m1 -13v2m0 2v2m0 0v2m1 -12v2m0 6v3m1 -8v4m0 8v2m0 0v4m1 -15v4m0 3v3m0 2v3m1 -8v2m1 -4v2m0 4v2m1 -14v3m0 7v4m1 -15v2m0 12v3m1 -22v3m1 2v3m0 2v3m0 6v3m1 -6v3m1 -16v2m1 -2v3m0 10v3m1 -12v2m0 0v3m0 0v2m0 0v2m1 -11v2m1 3v4m0 2v4m0 0v2m1 -17v4m0 2v2m0 7v2m2 -15v4m1 -9v3m0 2v3m0 0v4m1 -7v2m0 0v2m1 -2v3m1 -8v3m0 2v4m0 3v3m0 0v3m1 -17v4m0 6v2m1 -13v3m0 7v2m0 0v2m1 -5v3m0 0v4m0 0v2m1 -13v3m0 7v3m1 -19v3m0 0v2m0 4v3m1 -14v3m0 6v2m0 0v3m1 -9v3m0 0v2m0 0v2m0 2v2m0 2v3m1 -10v3m0 0v2m0 0v3m1 -16v4m0 0v2m0 3v3m1 -15v2m0 8v4m1 -3v2m0 0v2" stroke="#0a98f8" stroke-width="1" fill="none"/><path d="M0.5 0m118 547v2m3 -5v3m2 -1v3m1 -6v2m0 2v2m2 -5v2m1 -7v4m0 4v2m1 -6v4m1 0v2m1 -5v3m3 -2v2m2 -4v2m1 -5v4m0 0v3m2 -5v3m1 -4v2m1 1v3m0 0v2m2 -9v4m1 -4v3m1 -4v2m0 5v3m1 -5v2m2 -4v4m1 0v3m1 -9v4m1 2v3m5 -4v2m2 -6v2m1 2v2m1 -3v2m4 0v3m1 -8v2m2 3v3m2 -8v3m0 0v3m1 -2v2m1 -1v3m1 -11v3m2 -4v3m2 0v2m2 -5v3m0 0v3m1 -1v3m0 2v2m2 -4v2m1 -11v3m0 0v2m2 6v2m2 -9v3m1 2v4m1 -7v3m0 2v2m1 -6v3m0 0v3m1 -10v4m0 2v2m0 0v2m1 -3v3m1 -2v2m2 -3v3m4 -7v2m1 -3v3m0 3v2m1 -4v4m1 -5v2m0 0v3m2 -11v4m0 0v3m1 -4v2m1 1v3m4 -3v3m2 -2v4m2 -9v3m0 2v2m1 -9v4m0 2v3m0 0v2m1 -9v3m1 4v2m0 0v1m1 -5v2m1 -5v3m2 -6v4m0 2v4m2 -3v3m1 -5v3m1 -8v4m2 1v2m2 -6v3m2 0v4m4 -2v4m1 -13v3m0 2v2m0 2v4m2 -12v3m0 7v2m1 -2v2m1 -9v4m2 -1v2m0 0v4m3 -2v2m1 -7v2m1 -1v3m1 0v3m1 -15v3m0 8v2m0 0v2m1 -3v3m1 -7v4m0 0v3m1 -3v3m1 -10v4m1 3v3m1 -2v2m4 -7v2m1 -8v3m1 5v3m1 -7v3m0 4v2m1 -5v2m1 -7v3m0 2v3m0 0v2m1 -11v2m4 7v2m1 -7v2m0 2v3m1 -2v2m1 -5v3m1 -1v3m2 -9v2m0 0v4m0 0v3m2 -2v2m1 -5v3m2 -1v3m3 -10v3m1 5v2m1 -4v4m4 -2v2m2 -5v3m0 0v2m1 -3v3m1 -10v3m0 5v2m2 -5v2m0 0v3m1 -7v3m0 0v4m2 -3v3m4 -7v4m1 -1v4m1 -7v2m2 -4v4m0 0v3m1 -2v4m1 -12v2m0 8v2m1 -11v3m0 0v2m0 0v2m2 -14v3m0 8v2m1 -13v2m0 5v3m0 0v2m0 3v3m1 -9v3m1 -2v4m0 0v4m2 -8v2m1 -4v2m1 -6v4m0 0v3m0 0v2m0 0v2m1 -18v4m0 15v2m1 -14v2m0 7v2m1 -14v4m0 7v2m0 0v2m1 -9v4m0 0v3m1 -7v3m1 -1v2m0 0v2m0 0v3m1 -11v2m0 3v3m1 -3v2m0 0v2m1 -1v3m1 -5v4m1 -4v4m0 0v3m1 -2v2m2 -7v3m0 0v4m1 -14v3m0 0v4m0 2v2m0 0v3m1 -8v4m0 0v4m1 -19v4m0 2v3m1 1v3m0 2v2m0 0v2m1 -17v4m0 3v3m1 3v2m1 -8v3m0 0v3m0 0v4m1 -15v2m0 2v3m1 0v4m1 -5v3m1 -9v4m0 0v4m2 0v3m2 -6v4m0 2v2m1 -9v4m1 -4v2m0 3v2m1 -7v3m0 6v2m1 -14v3m0 0v2m0 7v2m2 -14v2m2 3v2m0 0v3m1 -3v2m0 2v3m2 -18v4m1 -2v3m0 2v2m1 -4v4m1 1v2m0 3v3m1 -21v3m3 3v2m1 -4v3m0 0v4m0 8v2m1 -10v4m0 0v2m0 0v4m1 -6v3m1 -10v4m0 2v2m1 -7v2m0 7v3m1 -16v4m0 0v3m1 6v3m2 -8v2m1 -10v2m0 0v3m0 6v3m0 0v2m1 -10v3m1 -7v3m0 3v3m2 -1v3m1 -11v4m0 5v2m1 -1v4m1 -11v2m0 0v2m0 4v3m1 -19v3m0 4v2m0 2v2m1 -8v3m0 3v3m0 0v2m1 -7v2m0 0v3m0 2v3m2 -20v2m0 12v2m0 0v4m1 -4v4m1 -12v3m1 -5v3m1 2v3m2 0v3m0 0v3m1 -17v2m0 13v2m1 -14v4m0 6v4m1 -15v3m0 0v3m0 7v2m1 -19v2m0 4v2m0 3v3m1 -11v3m0 6v4m1 -3v3m1 -12v3m1 3v2m0 3v2m0 0v2m1 -18v4m0 9v2m0 0v3m1 -8v3m0 0v3m0 0v2m1 -17v2m1 11v4m2 -10v2m0 3v3m1 -12v2m0 9v3m1 -16v3m1 6v3m0 2v2m1 -14v2m0 6v3m1 -5v3m1 -6v4m0 3v4m1 -7v3m0 0v4m1 -16v4m1 0v3m0 0v3m0 4v2m1 -6v3m1 -5v2m0 4v2m2 -12v3m0 0v2m0 0v2m1 -2v3m0 0v2m1 -17v3m0 4v4m1 6v2m1 -13v3m0 4v3m1 -4v3m1 -7v2m1 -3v4m0 0v3m0 0v2m1 -11v4m1 7v3m0 0v1m2 -5v2m2 -5v2m1 -8v3m0 0v3m1 -3v3m1 1v2m0 0v2m0 0v2m1 -10v3m0 0v3m0 2v2m1 -11v3m0 4v4m1 -5v3m0 0v2m3 -9v4m0 3v2m1 -9v3m1 -2v4m2 -2v2m0 2v2m2 -12v3m0 0v3m0 2v4m1 -18v2m0 12v4m1 -10v3m1 4v3m1 -5v2m1 -11v2m0 0v3m0 3v3m1 -3v3m1 -13v3m0 2v3m1 -6v2m0 5v4m1 -6v3m1 -7v3m0 4v3m1 -8v4m0 0v3m0 0v2m0 0v2m1 -6v2m0 0v2m2 -9v3m1 -2v3m0 5v2m1 -6v3m1 -6v2m0 5v2m1 -16v3m0 0v2m0 2v2m0 0v4m1 -8v3m0 0v2m0 0v3m0 0v3m1 -12v3m0 2v2m0 2v3m1 -9v2m0 0v2m0 2v3m1 -3v3m1 -12v2m0 0v2m0 0v3m1 -6v2m0 0v2m2 -8v4m1 1v4m2 3v3m1 -8v4m1 0v4m1 -6v3m1 -17v3m0 4v3m0 6v4m1 -8v4m0 0v2m1 -8v4m0 4v2m1 -14v3m0 2v4m1 -9v2m0 0v3m0 4v2m1 -5v3m1 -9v2m0 0v4m0 2v2m0 0v4m1 -9v2m0 5v2m1 -14v3m0 3v2m1 -1v4m0 0v3m2 -11v4m0 0v3m2 -4v2m0 3v3m1 -13v4m0 7v2m1 -12v3m0 2v3m1 0v2m1 -11v3m0 0v3m0 0v3m1 -8v4m0 3v3m3 -20v4m0 13v2m0 0v3m1 -15v3m0 0v3m0 2v2m1 -6v3m0 0v4m0 0v4m1 -4v4m1 -12v2m0 6v4m1 -4v4m1 -5v3m1 -11v2m0 9v2m1 -15v3m1 3v3m0 0v2m3 -11v3m0 8v4m1 -13v4m0 0v2m0 5v2m2 -6v3m0 0v3m1 -8v4m1 -15v4m0 9v2m0 0v4m1 -6v3m1 -6v4m0 2v3m1 -7v4m1 1v2m1 -16v3m0 2v2m1 5v4m1 -10v3m0 2v3m1 -10v2m0 6v4m1 -2v2m1 -11v3m0 0v2m0 3v3m1 -12v2m0 3v2m2 -5v3m0 0v4m1 -13v3m0 0v3m0 4v3m1 -6v4m1 -2v3m0 0v2m0 0v2m1 -9v3m0 2v4m1 -7v2m2 -4v3m0 0v2m1 0v4m1 -11v3m0 4v4m1 -10v4m1 -2v2m2 -1v2m1 -5v3m1 -10v3m1 8v2m0 0v2m0 0v2m1 -10v4m1 -15v4m0 2v3m0 9v3m1 -8v3m0 0v3m3 -11v3m0 2v2m0 0v3m1 -7v4m1 4v2m1 -9v2m0 0v2m0 0v2m1 -10v4m0 0v4m0 0v3m1 -9v4m0 2v3m0 0v2m1 -14v3m0 8v3m2 -14v3m0 7v4m1 -6v2m1 -11v3m0 4v4m0 0v4m1 -2v2m1 -8v3m1 -4v3m0 0v3m0 0v3m1 -5v2m1 -11v3m0 7v2m0 0v2m2 -9v4m0 0v3m2 -3v2m1 -8v4m0 2v3m2 -9v2m0 0v2m0 0v2m2 -6v2m0 0v2m1 -2v3m0 0v3m0 0v3m1 -8v3m1 -7v3m0 0v3m1 -8v2m1 1v3m0 3v2m2 0v3m1 -10v4m0 0v2m0 0v2m2 -11v2m1 2v3m0 0v3m1 0v3m1 -7v4m1 -4v3m1 -8v2m0 0v2m0 2v2m1 -2v3m0 0v3m1 -12v3m0 0v3m0 0v3m0 0v3m1 -6v2m0 0v4m1 -13v4m0 4v2m2 -10v3m0 3v3m0 0v4m2 -9v3m0 0v2m1 0v4m1 -10v4m0 0v3m1 -2v2m0 0v3m2 -16v4m0 10v2m2 -12v3m0 0v4m0 3v2m1 -13v2m0 6v2m1 -12v3m1 -1v2m2 2v3m1 -3v4m1 -11v3m0 11v2m1 -10v2m0 2v3m1 -17v3m0 4v2m0 0v3m1 6v2m1 -17v4m0 6v2m1 -8v4m0 0v2m0 0v2m2 -12v3m0 2v2m0 6v4m1 -13v3m0 0v2m1 -4v2m0 0v3m0 3v4m1 -11v3m0 2v4m1 0v2m1 -6v3m0 0v3m1 -6v4m1 -16v4m0 5v2m0 3v4m1 -7v4m1 -3v3m0 0v3m2 -19v4m0 13v2m1 -6v4m2 -13v3m1 7v2m2 -7v2m0 6v2m1 -5v2m1 -17v3m0 3v2m0 3v2m0 2v2m0 0v3m1 -2v2m1 -15v3m0 9v3m1 -2v2m1 -11v2m1 7v2m3 -16v3m0 2v2m0 4v3m1 0v2m1 -12v3m0 4v3m1 -7v2m0 3v4m2 -3v3m1 -21v3m1 5v4m0 0v3m2 4v2m1 -8v3m1 -4v3m1 4v2m1 -13v3m1 -4v2m0 2v4m0 0v3m1 -1v4m1 -6v3m1 -14v4m0 0v4m0 0v2m0 2v3m1 -8v3m1 0v3m0 0v4m1 -15v4m0 0v4m0 2v2m1 -16v4m0 4v3m0 0v2m0 2v4m1 -9v2m0 0v3m1 -2v3m1 -13v3m0 10v3m2 -5v3m0 0v2m1 -8v4m0 0v4m1 -7v3m1 -1v3m1 -1v3m1 -9v3m0 2v4m2 -2v2m1 -13v2m0 8v3m1 -3v3m1 -9v4m0 0v2m1 -6v2m0 0v2m1 -5v3m1 -2v3m1 -11v4m0 7v2m1 -12v2m0 0v3m1 -1v3m0 0v2m0 0v3m0 0v2m1 0v2m1 -15v4m0 2v3m1 -6v3m0 0v4m0 0v2m1 -7v2m0 5v3m1 -8v2m0 0v2m1 -11v3m0 6v2m1 -18v3m0 11v3m0 0v3m0 0v2m1 -10v2m0 2v2m0 0v4m1 -15v2m0 9v2m1 -13v2m1 -3v4m0 0v3m1 2v4m1 -7v2m0 2v3m0 0v3m1 -12v4m1 -6v2m1 -4v3m0 0v3m0 3v4m0 0v3m1 -3v3m1 -12v4m0 4v2m1 -2v4m2 -12v2m0 0v4m2 0v3m0 0v3m0 0v1m1 -9v4m1 -5v3m0 4v2m1 -10v4m1 -7v3m0 0v3m0 0v4m0 0v3m1 -9v3m2 -2v3m1 -8v4m0 0v3m2 1v3m0 0v2m1 -8v2m0 6v1m1 -14v2m0 2v2m0 0v2m0 0v3m1 -4v2m0 0v4m1 -11v3m0 0v2m0 0v4m0 0v2m1 -8v4m1 0v2m3 -11v3m0 7v3m2 -14v3m0 0v2m1 -7v3m0 6v4m1 -11v4m0 6v4m1 -4v2m1 -7v2m0 2v2m1 1v2m1 -6v3m1 -1v2m1 -4v4" stroke="#10d8f8" stroke-width="1" fill="none"/><path d="M0.5 0m118 549v1m1 -1v1m5 -5v2m3 -4v4m1 0v2m12 -8v3m3 2v3m7 0v1m2 -3v2m1 -6v2m5 4v1m1 -9v3m4 5v1m7 -10v2m1 5v2m4 -4v4m5 -2v2m1 0v1m1 -1v1m5 -5v2m1 2v1m2 -8v4m2 -2v3m0 0v2m2 -6v2m3 -5v2m0 4v3m1 -5v3m3 -2v4m4 -3v3m10 -8v3m2 1v4m2 -6v2m4 -2v2m0 0v4m0 0v1m9 -1v1m7 -6v3m0 2v1m2 -8v4m3 3v1m2 -7v3m2 -3v3m5 3v1m2 -4v3m8 -4v2m0 0v2m1 0v1m6 -1v1m2 -1v1m5 -9v4m4 -3v3m2 -2v2m2 -1v2m4 -4v2m0 5v1m1 -11v4m26 3v3m3 -8v2m2 -2v3m2 2v3m0 0v1m10 -8v2m0 0v3m1 -4v2m1 -1v3m1 -10v2m0 8v2m6 -12v3m1 5v4m2 -6v2m2 0v4m2 -9v2m0 7v1m1 -12v4m0 4v3m1 0v1m1 -10v4m3 5v1m2 -10v4m2 -5v2m0 8v1m1 -5v2m0 0v2m1 -8v2m1 4v2m1 -10v3m2 -8v3m1 -1v2m1 6v2m0 0v3m2 -4v4m2 -13v3m1 4v4m0 0v2m1 -11v4m1 0v2m0 3v2m1 -3v3m1 -3v3m2 -10v3m8 -1v4m2 2v2m1 0v1m1 -16v3m0 3v3m3 -1v3m4 -5v3m2 -1v3m3 -7v3m0 0v4m1 -5v2m0 0v3m1 -1v3m0 0v2m0 0v1m1 -1v1m1 -1v1m1 -12v3m1 -3v4m0 3v2m1 -14v2m0 11v3m1 -3v3m2 0v1m3 -11v4m0 3v3m1 -12v2m1 -4v3m0 8v3m1 -2v2m2 -6v4m0 0v2m4 -5v3m3 -3v2m1 0v3m2 -11v2m1 -1v3m0 7v1m1 -6v3m0 0v2m1 -7v3m0 0v2m4 2v1m5 -1v1m3 -4v3m2 -11v3m1 1v4m1 3v1m1 -9v3m4 -5v3m5 4v3m2 -7v3m2 0v2m4 -3v2m1 -3v3m1 3v1m1 -8v4m0 0v3m1 -11v3m0 6v2m4 0v1m5 -3v2m1 0v1m6 -4v3m1 -12v2m1 6v4m1 -4v4m4 -9v2m2 3v4m3 -8v3m1 5v1m1 -6v3m0 2v1m8 -5v4m5 -7v2m2 1v4m1 -10v4m3 3v3m1 -7v3m1 -3v2m0 5v1m2 -8v2m0 3v2m4 -10v3m1 4v3m0 0v1m5 -13v3m0 9v1m4 -18v4m0 5v2m1 0v2m1 1v3m3 -18v2m0 7v2m1 0v3m0 0v4m1 -8v2m3 0v3m2 3v1m1 -11v3m3 1v4m2 0v2m2 -7v2m0 5v1m4 -1v1m1 -8v2m1 0v2m3 -4v3m1 -3v3m0 0v2m1 0v2m3 -7v2m0 5v1m1 -15v4m0 0v3m0 3v2m2 -4v2m0 0v4m3 -2v2m1 0v1m1 -7v2m8 -9v4m0 3v3m1 0v3m1 -2v2m6 -6v3m3 3v1m5 -11v2m0 4v2m1 -2v4m3 -7v2m2 0v2m2 1v2m3 -4v4m1 -7v3m1 4v1m2 -5v4m2 -8v2m0 3v3m6 0v1m1 -14v2m1 3v2m1 1v3m1 -7v4m1 -4v3m0 4v2m1 -6v3m3 -3v3m1 -3v4m2 -10v3m1 0v2m0 3v2m0 2v1m2 -5v2m2 -3v3m1 -4v3m0 0v3m1 -7v3m1 -5v4m4 5v1m1 -14v4m0 3v3m1 -13v2m0 11v3m0 0v1m2 -5v4m1 -14v4m0 2v3m0 0v3m3 -5v3m1 1v3m1 0v1m4 -8v3m0 2v2m2 -7v2m1 -1v2m2 1v3m1 -8v2m0 0v3m2 -11v4m1 10v1m4 -7v2m2 4v1m1 -9v3m1 -4v2m3 7v1m3 -12v2m0 0v4m1 3v2m1 -5v3m1 -4v4m7 -11v3m1 0v3m0 5v2m1 -7v3m3 -2v4m3 -4v3m0 3v1m3 -9v3m0 0v3m2 -9v3m0 3v2m0 3v1m1 -15v3m7 9v2m1 -3v3m1 -6v3m0 0v3m4 -8v2m3 -2v4m1 -6v2m0 0v2m0 0v3m1 3v1m1 -11v3m4 0v3m5 -3v3m1 2v2" stroke="#08d8d0" stroke-width="1" fill="none"/><path d="M0.5 0m120 549v1m1 -3v2m1 0v1m2 -1v1m1 -1v1m1 -1v1m2 -1v1m1 -1v1m1 -1v1m1 -1v1m1 -1v1m1 -1v1m3 -1v1m2 -1v1m1 -5v4m0 0v1m1 -1v1m1 -1v1m2 -1v1m1 -1v1m1 -1v1m1 -1v1m1 -1v1m6 -1v1m1 -1v1m3 -1v1m5 -1v1m2 -1v1m2 -1v1m2 -1v1m2 -1v1m1 -1v1m3 -3v2m0 0v1m1 -8v3m0 4v1m5 -1v1m3 -1v1m2 -1v1m1 -1v1m1 -1v1m3 -1v1m1 -1v1m1 -1v1m1 -1v1m1 -1v1m1 -1v1m2 -1v1m2 -1v1m3 -1v1m1 -1v1m2 -1v1m2 -1v1m1 -1v1m3 -4v3m0 0v1m2 -1v1m6 -1v1m2 -1v1m1 -1v1m5 -1v1m1 -1v1m1 -1v1m2 -1v1m4 -1v1m1 -1v1m2 -1v1m10 -1v1m1 -1v1m1 -1v1m5 -1v1m3 -1v1m2 -1v1m1 -4v3m0 0v1m1 -1v1m3 -1v1m1 -1v1m3 -1v1m2 -1v1m4 -1v1m2 -1v1m1 -1v1m4 -1v1m3 -1v1m1 -1v1m1 -1v1m3 -1v1m1 -8v2m0 5v1m1 -1v1m3 -1v1m1 -6v2m6 3v1m1 -1v1m2 -1v1m2 -1v1m1 -1v1m1 -4v3m0 0v1m1 -1v1m1 -1v1m1 -1v1m2 -1v1m1 -9v2m2 1v3m1 2v1m1 -1v1m1 -1v1m4 -5v4m4 0v1m1 -1v1m1 -1v1m1 -19v2m0 16v1m1 -1v1m3 -1v1m5 -1v1m1 -1v1m1 -1v1m2 -1v1m1 -1v1m3 -1v1m2 -1v1m2 -1v1m1 -1v1m1 -1v1m3 -1v1m3 -1v1m1 -1v1m1 -1v1m2 -1v1m1 -1v1m2 -1v1m1 -1v1m4 -1v1m1 -1v1m2 -1v1m1 -1v1m1 -1v1m1 -1v1m3 -1v1m2 -1v1m1 -9v2m0 0v4m0 2v1m3 -4v3m3 0v1m1 -1v1m2 -1v1m2 -4v3m4 0v1m1 -1v1m1 -1v1m1 -1v1m5 -1v1m2 -1v1m4 -8v2m4 5v1m2 -1v1m1 -1v1m2 -1v1m3 -1v1m1 -1v1m2 -1v1m4 -1v1m1 -1v1m1 -1v1m1 -1v1m1 -1v1m2 -1v1m5 -1v1m2 -1v1m1 -1v1m1 -1v1m1 -1v1m2 -1v1m2 -1v1m1 -1v1m1 -1v1m2 -1v1m3 -1v1m2 -1v1m1 -1v1m1 -1v1m1 -4v3m0 0v1m1 -1v1m3 -1v1m3 -1v1m3 -1v1m4 -1v1m4 -1v1m1 -1v1m1 -1v1m2 -1v1m2 -1v1m1 -1v1m1 -1v1m2 -1v1m1 -1v1m3 -1v1m3 -1v1m4 -1v1m1 -1v1m5 -1v1m2 -10v2m0 7v1m1 -1v1m3 -1v1m1 -1v1m2 -1v1m3 -1v1m4 -1v1m1 -1v1m2 -1v1m4 -1v1m3 -1v1m1 -5v4m0 0v1m2 -1v1m1 -1v1m1 -1v1m1 -1v1m1 -1v1m3 -1v1m1 -1v1m2 -1v1m1 -1v1m3 -1v1m1 -1v1m1 -1v1m2 -1v1m3 -1v1m4 -1v1m1 -1v1m3 -1v1m2 -1v1m6 -1v1m7 -1v1m2 -1v1m2 -1v1m1 -1v1m1 -1v1m3 -1v1m1 -1v1m1 -1v1m5 -1v1m2 -9v2m1 6v1m4 -1v1m3 -6v2m0 3v1m1 -1v1m1 -1v1m8 -1v1m6 -6v3m1 2v1m6 -6v3m0 2v1m1 -1v1m2 -1v1m1 -1v1m2 -1v1m1 -1v1m6 -1v1m1 -1v1m3 -1v1m1 -1v1m1 -1v1m2 -1v1m1 -8v4m1 3v1m1 -1v1m1 -1v1m1 -3v2m6 -3v3m0 0v1m3 -1v1m4 -1v1m1 -1v1m8 -1v1m3 -1v1m2 -1v1m3 -1v1m2 -1v1m3 -1v1m1 -1v1m1 -1v1m1 -1v1m1 -1v1m2 -1v1m1 -8v3m1 4v1m1 -1v1m2 -1v1m2 -1v1m2 -1v1m3 -1v1m4 -1v1m1 -1v1m3 -1v1m8 -1v1m1 -1v1m2 -1v1m3 -1v1m2 -1v1m1 -1v1m3 -1v1m2 -3v2" stroke="#20e0a0" stroke-width="1" fill="none"/><path d="M0.5 0m119 550v1m4 -2v1m4 -1v1m5 0v1m2 -2v1m1 -1v1m0 0v1m2 -2v1m5 -1v1m6 -1v1m0 0v1m1 -2v1m1 0v1m1 -2v1m1 -1v1m3 -1v1m1 -1v1m2 0v1m1 -2v1m1 -1v1m1 -1v1m4 -1v1m2 -1v1m2 -1v1m3 -1v1m1 -1v1m3 -1v1m1 -1v1m1 -1v1m1 -1v1m3 0v1m1 -1v1m1 -2v1m5 -1v1m4 0v1m3 -2v1m4 -1v1m1 -1v1m0 0v1m2 -1v1m1 -2v1m2 -1v1m3 -1v1m1 -1v1m2 -1v1m2 -1v1m2 -1v1m1 -1v1m3 -1v1m4 -1v1m1 -1v1m1 -1v1m0 0v1m4 -2v1m4 -1v1m2 0v1m1 -2v1m3 -1v1m1 -1v1m1 -1v1m1 -1v1m2 -1v1m1 -1v1m1 -1v1m1 0v1m3 -2v1m1 -1v1m2 -1v1m2 -1v1m1 -1v1m2 -1v1m1 0v1m3 -2v1m4 -1v1m1 -1v1m5 -1v1m1 -1v1m2 -1v1m4 -1v1m1 -1v1m2 -1v1m1 -1v1m2 0v1m2 -2v1m3 0v1m2 -2v1m1 -1v1m0 0v1m2 -2v1m1 -1v1m1 -1v1m1 -1v1m0 0v1m1 -1v1m1 -2v1m3 -1v1m2 -1v1m2 0v1m7 -2v1m1 -1v1m1 -1v1m0 0v1m3 -1v1m1 -2v1m1 -1v1m2 -1v1m1 -1v1m1 -1v1m1 -1v1m5 0v1m1 -2v1m1 -1v1m0 0v1m1 -1v1m1 -2v1m1 0v1m1 -2v1m1 -1v1m4 -1v1m3 -1v1m1 -1v1m0 0v1m8 -1v1m5 -1v1m5 -1v1m1 -2v1m3 -1v1m1 -1v1m4 -1v1m5 -1v1m1 -1v1m2 -1v1m3 -1v1m1 -1v1m0 0v1m1 -2v1m1 -1v1m0 0v1m4 -2v1m2 -1v1m1 -1v1m1 -1v1m1 -1v1m1 -1v1m5 -1v1m0 0v1m3 -1v1m2 -2v1m2 -1v1m1 -1v1m2 -1v1m1 -1v1m2 -1v1m5 -1v1m2 -1v1m6 -1v1m1 -1v1m0 0v1m9 -2v1m1 -1v1m1 -1v1m3 -1v1m7 -1v1m1 0v1m3 -2v1m2 -1v1m1 -1v1m2 -1v1m1 0v1m1 -1v1m3 -1v1m1 -2v1m1 -1v1m3 -1v1m2 -1v1m1 -1v1m3 -1v1m1 -1v1m1 0v1m1 -2v1m1 -1v1m5 -1v1m2 -1v1m4 -1v1m3 -1v1m1 -1v1m2 -1v1m1 -1v1m0 0v1m4 -2v1m3 -1v1m1 -1v1m1 -1v1m3 -1v1m3 -1v1m1 -1v1m3 -1v1m2 -1v1m1 -1v1m3 -1v1m0 0v1m1 -2v1m1 0v1m2 -2v1m3 -1v1m1 -1v1m2 -1v1m1 0v1m3 -2v1m0 0v1m6 -2v1m1 -1v1m3 -1v1m4 -1v1m4 -1v1m2 -1v1m3 -1v1m1 -1v1m4 -1v1m1 -1v1m2 -1v1m2 -1v1m0 0v1m1 -2v1m2 -1v1m0 0v1m1 -2v1m2 -1v1m4 -1v1m1 -1v1m0 0v1m2 -2v1m2 -1v1m4 -1v1m1 -1v1m2 0v1m2 -2v1m0 0v1m1 -2v1m1 -1v1m4 -1v1m2 -1v1m1 -1v1m1 -1v1m3 -1v1m4 -1v1m1 -1v1m1 -1v1m0 0v1m1 -2v1m1 -1v1m1 -1v1m3 -1v1m1 -1v1m1 -1v1m1 -1v1m1 -1v1m1 -1v1m1 0v1m1 -2v1m2 -1v1m1 -1v1m0 0v1m4 -2v1m6 -1v1m2 -1v1m2 -1v1m1 0v1m2 -2v1m0 0v1m1 -2v1m5 0v1m5 -2v1m1 -1v1m1 -1v1m1 -1v1m2 -1v1m2 -1v1m1 -1v1m2 -1v1m0 0v1m1 -2v1m1 -1v1m4 -1v1m2 -1v1m2 -1v1m1 -1v1m3 -1v1m2 -1v1m1 0v1m2 -2v1m2 -1v1m2 -1v1m1 -1v1m6 -1v1m2 0v1m3 -2v1m2 -1v1m1 0v1m2 -1v1m1 -2v1m1 -1v1m4 -1v1m0 0v1m3 -2v1m0 0v1m1 -2v1m0 0v1m3 -2v1m1 -1v1m1 -1v1m0 0v1m2 -2v1m1 -1v1m3 -1v1m2 0v1m1 -2v1m2 -1v1m3 -1v1m1 -1v1m2 -1v1m1 -1v1m1 -1v1" stroke="#40e070" stroke-width="1" fill="none"/><path d="M0.5 0m118 550v1m3 -2v1m2 0v1m1 -1v1m1 -1v1m3 -1v1m2 -1v1m1 -1v1m6 -1v1m0 0v1m3 -2v1m1 -1v1m1 -1v1m5 -1v1m4 -1v1m2 -1v1m3 -1v1m3 -1v1m1 -1v1m2 -1v1m1 -1v1m1 -1v1m2 -1v1m1 -1v1m2 -1v1m1 -1v1m1 -1v1m8 -1v1m2 -1v1m3 -1v1m2 -1v1m2 -1v1m1 -1v1m2 -1v1m1 -1v1m4 -1v1m2 -2v1m2 0v1m2 -1v1m4 -1v1m6 -1v1m2 -1v1m1 -1v1m1 -1v1m1 -1v1m1 -2v1m1 0v1m1 -1v1m2 -1v1m1 -1v1m1 -1v1m4 -1v1m2 -1v1m1 -1v1m2 -2v1m0 0v1m2 -1v1m2 -1v1m1 -1v1m1 -1v1m1 -1v1m1 -1v1m3 -1v1m2 -1v1m4 -1v1m1 -1v1m1 -1v1m0 0v1m2 -2v1m1 -1v1m2 -1v1m1 -1v1m5 -1v1m1 -1v1m4 -1v1m3 -1v1m3 -1v1m3 -1v1m1 -1v1m1 -2v1m2 0v1m8 -1v1m3 -1v1m1 -1v1m2 -1v1m1 -1v1m4 -2v1m2 0v1m2 -1v1m2 -1v1m6 -1v1m1 -2v1m1 0v1m4 -1v1m3 -1v1m4 -1v1m8 -1v1m4 -2v1m1 0v1m1 -1v1m1 -1v1m2 -1v1m3 -1v1m3 -1v1m3 -1v1m2 -1v1m3 -2v1m1 0v1m1 -2v1m1 0v1m4 -2v1m0 0v1m1 -1v1m2 -1v1m1 -1v1m1 -1v1m3 -2v1m1 0v1m1 -1v1m1 -1v1m2 -1v1m4 -1v1m1 -1v1m1 -1v1m2 -1v1m3 -1v1m3 -1v1m1 -1v1m1 -1v1m2 -1v1m3 -1v1m1 -1v1m6 -1v1m3 -1v1m2 -1v1m1 -1v1m5 -2v1m0 0v1m1 -1v1m1 -1v1m1 -2v1m3 0v1m2 -1v1m1 -2v1m0 0v1m2 -1v1m1 -1v1m2 -1v1m2 -1v1m5 -1v1m3 -1v1m3 -1v1m1 -1v1m3 -1v1m1 -1v1m1 -1v1m1 -1v1m1 -1v1m1 -1v1m2 -1v1m1 -1v1m2 -1v1m3 -1v1m1 -1v1m5 0v1m1 -2v1m1 -1v1m4 -1v1m2 -1v1m6 -1v1m1 -1v1m1 -1v1m1 -1v1m1 -1v1m1 -1v1m5 -1v1m1 -1v1m1 -1v1m1 -1v1m1 -1v1m2 -1v1m1 -1v1m1 -1v1m3 -1v1m4 -1v1m1 -1v1m3 -2v1m0 0v1m1 -1v1m2 -1v1m3 -1v1m2 -1v1m1 -1v1m1 -1v1m1 -1v1m1 -1v1m6 -1v1m1 -1v1m2 -1v1m3 -1v1m1 -1v1m2 -1v1m4 -1v1m3 -1v1m1 -1v1m3 -1v1m3 -1v1m1 -1v1m3 -1v1m2 -1v1m1 -1v1m6 -1v1m1 -1v1m2 -1v1m2 -1v1m2 -1v1m3 -1v1m5 -2v1m1 -1v1m0 0v1m4 -1v1m4 -1v1m2 -1v1m2 -1v1m1 -1v1m4 -1v1m1 -1v1m1 -2v1m1 0v1m1 -1v1m1 -1v1m0 0v1m2 -2v1m1 -1v1m1 -1v1m2 -1v1m1 -1v1m1 -1v1m1 -1v1m5 -1v1m1 -1v1m2 -1v1m1 -1v1m1 -1v1m1 -1v1m2 -1v1m4 -1v1m1 -1v1m3 -2v1m0 0v1m1 -1v1m3 -1v1m2 -2v1m1 0v1m1 -1v1m1 -1v1m1 -1v1m2 -2v1m1 0v1m2 -1v1m3 -1v1m2 -1v1m4 -1v1m5 -1v1m4 -1v1m3 -1v1m4 -1v1m2 -2v1m0 0v1m1 -1v1m1 -1v1m1 -1v1m1 -2v1m0 0v1m1 -1v1m2 -1v1m1 -1v1m1 -1v1m1 -1v1m3 -1v1m3 -1v1m1 -1v1m1 -1v1m2 -1v1m2 -1v1m1 -1v1m1 0v1m1 -2v1m1 -1v1m1 -2v1m2 0v1m0 0v1m9 -2v1m1 -1v1m1 -1v1m2 -1v1m1 -1v1m4 -2v1m0 0v1m1 -1v1m3 -1v1m1 -1v1m5 -1v1m9 -1v1m1 -1v1m1 -1v1" stroke="#60f050" stroke-width="1" fill="none"/><path d="M0.5 0m118 551v1m2 -2v1m1 -1v1m1 -1v1m0 0v1m4 -2v1m1 -1v1m2 -1v1m0 0v1m4 -1v1m1 -2v1m2 -1v1m0 0v1m2 -2v1m1 -1v1m0 0v1m4 -2v1m1 -1v1m0 0v1m1 -2v1m1 -1v1m6 -1v1m2 -1v1m1 -1v1m0 0v1m2 -2v1m2 0v1m2 -1v1m2 -1v1m2 -2v1m0 0v1m3 -2v1m1 0v1m3 -2v1m1 -1v1m1 0v1m1 -2v1m0 0v1m1 -2v1m1 -1v1m1 -1v1m2 -1v1m5 -1v1m0 0v1m2 -2v1m3 -1v1m5 -1v1m2 -1v1m1 -1v1m3 0v1m3 -2v1m0 0v1m1 -2v1m2 -1v1m0 0v1m2 -2v1m1 -1v1m1 -1v1m2 -1v1m5 -1v1m2 0v1m1 -2v1m4 -1v1m2 -1v1m2 -1v1m2 0v1m1 -2v1m2 -1v1m2 0v1m1 -1v1m5 -2v1m1 -1v1m2 -1v1m0 0v1m1 -1v1m3 -2v1m4 -1v1m6 -1v1m2 -1v1m4 -1v1m1 -1v1m1 -1v1m2 -1v1m1 -1v1m1 0v1m1 -2v1m0 0v1m3 -2v1m1 -1v1m3 -1v1m1 -1v1m2 -1v1m1 -1v1m1 -1v1m1 -1v1m2 -1v1m1 -1v1m2 -1v1m7 -1v1m1 -1v1m0 0v1m3 -2v1m4 -1v1m2 -1v1m2 -1v1m4 -1v1m2 -1v1m1 -1v1m0 0v1m3 -2v1m3 -1v1m1 -1v1m1 -1v1m2 -1v1m0 0v1m1 -2v1m1 -1v1m1 -1v1m1 -1v1m1 -1v1m5 -1v1m5 -1v1m2 -1v1m1 -1v1m5 -1v1m1 -1v1m4 -1v1m1 0v1m1 -2v1m1 0v1m1 -2v1m3 0v1m1 -2v1m7 -1v1m1 -1v1m1 -1v1m4 -1v1m2 -1v1m1 -1v1m0 0v1m1 -2v1m4 -1v1m0 0v1m3 -1v1m3 -2v1m4 -1v1m0 0v1m2 -2v1m1 -1v1m3 -1v1m1 -1v1m1 -1v1m0 0v1m1 -2v1m3 -1v1m3 -1v1m3 -1v1m1 -1v1m0 0v1m2 -2v1m4 -1v1m1 -1v1m1 -1v1m2 -1v1m3 -1v1m0 0v1m3 -2v1m3 0v1m1 -2v1m1 -1v1m1 -1v1m1 -1v1m2 -1v1m2 0v1m1 -2v1m1 -1v1m3 -1v1m1 -1v1m10 -1v1m2 -1v1m0 0v1m1 -1v1m5 -2v1m1 -1v1m2 0v1m1 -1v1m1 -2v1m1 -1v1m1 -1v1m0 0v1m1 -1v1m3 -2v1m1 -1v1m1 -1v1m1 -1v1m0 0v1m8 -2v1m1 -1v1m1 -1v1m1 -1v1m2 0v1m1 -1v1m5 -1v1m3 -2v1m1 0v1m1 -2v1m1 -1v1m1 -1v1m3 -1v1m1 -1v1m0 0v1m3 -2v1m2 -1v1m3 0v1m2 -1v1m2 -1v1m1 -1v1m1 -2v1m0 0v1m1 -2v1m2 -1v1m2 0v1m2 -2v1m2 -1v1m1 -1v1m2 0v1m3 -2v1m2 -1v1m2 -1v1m0 0v1m1 -2v1m3 -1v1m0 0v1m1 -2v1m2 -1v1m1 -1v1m0 0v1m3 -2v1m1 -1v1m2 -1v1m3 -1v1m0 0v1m1 -2v1m1 -1v1m0 0v1m1 -2v1m1 -1v1m0 0v1m3 -2v1m1 0v1m1 -2v1m1 0v1m1 -2v1m0 0v1m3 -2v1m3 -1v1m1 -1v1m1 -1v1m1 -1v1m2 -1v1m1 -1v1m3 -1v1m1 -1v1m1 -1v1m2 -1v1m0 0v1m2 -2v1m4 -1v1m3 0v1m1 -2v1m1 0v1m3 -2v1m1 0v1m3 -2v1m1 -2v1m4 1v1m1 -2v1m1 -1v1m4 -1v1m4 0v1m1 -2v1m2 -1v1m1 -1v1m1 0v1m3 -2v1m0 0v1m4 -2v1m1 -1v1m1 0v1m1 -2v1m6 -1v1m0 0v1m1 -2v1m5 -1v1m1 0v1m1 -2v1m4 -1v1m2 -1v1m1 -1v1m1 -1v1m1 -1v1m2 -1v1m1 -1v1m2 0v1m1 -2v1m1 -1v1m0 0v1m2 -1v1m1 -2v1m1 -1v1m2 -1v1m2 0v1m2 -1v1m3 -2v1m5 0v1m3 -2v1m1 -1v1m0 0v1m2 -1v1m2 -2v1m0 0v1m1 -1v1m1 -2v1m1 0v1m2 -2v1m2 0v1m2 -2v1m2 -1v1m1 -1v1m1 -1v1m2 -1v1m2 -1v1m2 0v1m3 -1v1m5 -2v1m2 0v1m1 -2v1m4 0v1m1 -2v1m0 0v1m1 -2v1m0 0v1m1 -2v1m0 0v1m3 -2v1m2 -1v1m1 -1v1m0 0v1m1 -2v1m1 -1v1m0 0v1m1 -2v1m4 -1v1" stroke="#d0ff20" stroke-width="1" fill="none"/><path d="M0.5 0m120 551v1m1 -1v1m2 -1v1m1 -1v1m1 -1v1m1 -1v1m6 -1v1m2 -1v1m7 -1v1m1 -1v1m1 -1v1m6 -2v1m1 0v1m1 -1v1m2 -1v1m1 -1v1m4 -1v1m3 -2v1m3 0v1m2 -1v1m4 -1v1m2 -1v1m2 -2v1m2 0v1m5 -1v1m1 -1v1m6 -1v1m1 -1v1m1 -1v1m1 -1v1m2 -1v1m1 -2v1m1 0v1m1 -1v1m1 -1v1m2 -2v1m0 0v1m3 -1v1m1 -1v1m2 -1v1m1 -1v1m2 -2v1m0 0v1m1 -1v1m2 -1v1m1 -1v1m1 -1v1m1 -1v1m2 -1v1m2 -1v1m5 -1v1m2 -1v1m3 -1v1m1 -1v1m1 -1v1m3 -1v1m2 -1v1m6 -1v1m1 -1v1m2 -1v1m3 -2v1m3 0v1m1 -1v1m5 -2v1m0 0v1m1 -1v1m1 -1v1m2 -1v1m2 -2v1m0 0v1m1 -1v1m1 -1v1m1 -1v1m1 -1v1m2 0v1m5 -3v1m0 0v1m3 -1v1m1 -1v1m1 -1v1m2 -1v1m1 -1v1m2 -1v1m1 -1v1m1 -1v1m1 -1v1m1 -1v1m1 -1v1m2 -1v1m3 -1v1m1 -1v1m1 -1v1m4 -1v1m3 -1v1m1 -2v1m1 0v1m1 -1v1m1 -1v1m1 -1v1m1 -1v1m1 -1v1m1 -2v1m0 0v1m1 -2v1m1 0v1m1 -1v1m2 -1v1m3 -1v1m4 -1v1m2 -1v1m1 -1v1m3 -1v1m3 -1v1m1 -1v1m1 -1v1m1 -1v1m1 -1v1m1 -1v1m2 -1v1m1 -1v1m2 -1v1m1 -1v1m1 -1v1m1 -1v1m2 -2v1m1 0v1m1 -1v1m4 -2v1m1 0v1m1 -1v1m6 -1v1m1 -2v1m2 0v1m4 -1v1m1 -1v1m3 -1v1m3 -1v1m2 -1v1m5 -1v1m1 -1v1m2 -1v1m1 -2v1m0 0v1m3 -1v1m1 -1v1m1 -1v1m2 -1v1m2 -1v1m1 -1v1m1 -1v1m1 -1v1m1 -1v1m2 -1v1m4 -1v1m1 -1v1m3 -1v1m1 -1v1m1 -1v1m1 -1v1m2 -2v1m0 0v1m1 -1v1m1 -1v1m1 -1v1m2 -1v1m1 -1v1m1 -1v1m1 -1v1m1 -1v1m2 -1v1m2 -1v1m3 -1v1m3 -1v1m2 -1v1m3 -1v1m1 -2v1m0 0v1m4 -1v1m2 -1v1m1 -1v1m1 -1v1m1 -1v1m2 -1v1m5 -1v1m4 -2v1m4 0v1m2 -1v1m4 -1v1m4 -2v1m2 0v1m2 -1v1m4 -1v1m1 -1v1m1 -1v1m1 -1v1m1 -1v1m2 -1v1m2 -1v1m1 -1v1m3 -1v1m1 -1v1m1 -2v1m0 0v1m1 -1v1m2 -1v1m1 -1v1m1 -1v1m2 -1v1m2 -1v1m1 -1v1m2 -1v1m3 -1v1m3 -1v1m1 -2v1m1 0v1m1 -2v1m1 0v1m7 -1v1m4 -1v1m1 -1v1m1 -1v1m2 -1v1m1 -1v1m2 -1v1m5 -1v1m3 -1v1m1 -1v1m2 -1v1m2 -1v1m3 -1v1m1 -1v1m1 -1v1m2 -1v1m2 -1v1m4 -1v1m4 -1v1m2 -1v1m3 -1v1m2 -1v1m1 -1v1m1 -1v1m1 -1v1m1 -1v1m5 -1v1m3 -1v1m2 -1v1m3 -1v1m1 -1v1m1 -1v1m1 -1v1m2 -1v1m1 -1v1m1 -1v1m2 -1v1m6 -1v1m3 -1v1m2 -1v1m1 -1v1m5 -1v1m1 -1v1m1 -1v1m3 -1v1m3 -1v1m1 -1v1m1 -1v1m2 -1v1m1 -1v1m2 -1v1m2 -1v1m4 -1v1m1 -2v1m0 0v1m1 -1v1m1 -1v1m1 -1v1m4 -1v1m4 -1v1m2 -1v1m1 -1v1m1 -2v1m2 0v1m1 -1v1m2 -1v1m1 -1v1m2 -1v1m1 -1v1m1 -1v1m1 -2v1m2 0v1m4 -1v1m1 -1v1m1 -1v1m1 -1v1m5 -1v1m2 -1v1m2 -1v1m1 -1v1m1 -1v1m1 -2v1m1 0v1m4 -1v1m5 -1v1m2 -1v1m4 -1v1m4 -1v1m2 -1v1m2 -1v1m1 -1v1m1 -2v1m0 0v1m3 -1v1m5 -1v1m4 -1v1m1 -1v1m1 -1v1m2 -2v1m4 0v1m1 -1v1m1 -1v1m1 -2v1m0 0v1m3 -1v1m4 -1v1m1 -1v1m1 -1v1" stroke="#ffff00" stroke-width="1" fill="none"/><path d="M0.5 0m119 551v1m8 -1v1m1 -1v1m2 -1v1m1 -1v1m2 -2v1m2 0v1m3 -1v1m2 -1v1m5 -1v1m1 -1v1m2 -1v1m1 -1v1m3 -1v1m4 -1v1m1 -1v1m1 0v1m9 -2v1m1 -1v1m3 -1v1m2 -1v1m4 -1v1m1 -1v1m1 -1v1m1 -1v1m2 0v1m1 -2v1m1 -1v1m2 -1v1m0 0v1m1 -2v1m5 -1v1m2 -1v1m0 0v1m4 -2v1m2 -1v1m7 0v1m8 -2v1m2 -1v1m4 -1v1m1 -1v1m4 -1v1m1 -1v1m1 0v1m4 -2v1m2 -1v1m4 -1v1m0 0v1m1 -2v1m1 -1v1m3 -1v1m3 0v1m1 -2v1m2 -1v1m4 -1v1m2 -1v1m4 -1v1m2 -1v1m6 -1v1m1 -1v1m1 -1v1m0 0v1m1 -2v1m4 -1v1m1 -1v1m4 -1v1m3 -1v1m7 -1v1m2 -1v1m5 -1v1m1 -1v1m3 -1v1m1 -1v1m2 -1v1m8 -1v1m3 -1v1m3 -1v1m2 -1v1m0 0v1m1 -2v1m1 -1v1m2 -1v1m4 -1v1m3 -1v1m7 -1v1m3 -1v1m5 -1v1m1 -1v1m4 -1v1m1 -1v1m1 -1v1m4 -1v1m2 -1v1m1 -1v1m3 -1v1m2 -1v1m1 -1v1m1 -1v1m4 -1v1m2 -1v1m1 -1v1m2 -1v1m2 -1v1m2 -1v1m1 -1v1m7 -1v1m2 0v1m2 -1v1m11 -2v1m1 -1v1m3 -1v1m1 -1v1m5 0v1m5 -2v1m5 0v1m1 -2v1m5 -1v1m2 -1v1m3 -1v1m2 -1v1m5 -1v1m0 0v1m1 -2v1m7 -1v1m2 -1v1m2 -1v1m1 -1v1m2 -1v1m1 -1v1m2 0v1m1 -2v1m1 -1v1m1 -1v1m2 -1v1m6 -1v1m0 0v1m3 -2v1m1 -1v1m2 -1v1m3 -1v1m0 0v1m1 -2v1m6 -1v1m2 -1v1m4 0v1m5 -1v1m6 -2v1m3 -1v1m1 0v1m2 -2v1m0 0v1m2 -2v1m3 -1v1m5 -1v1m4 -1v1m2 -1v1m1 -1v1m5 -1v1m5 -1v1m1 -1v1m2 -1v1m3 -1v1m5 -1v1m3 -1v1m4 -1v1m2 -1v1m2 0v1m1 -2v1m4 -1v1m2 0v1m6 -2v1m6 -1v1m1 -1v1m1 -1v1m3 -1v1m1 -1v1m2 -1v1m2 -1v1m6 -1v1m3 0v1m3 -1v1m1 -2v1m2 -1v1m0 0v1m3 -2v1m1 -1v1m2 -1v1m3 -2v1m1 0v1m1 -1v1m1 -1v1m4 -1v1m1 -1v1m3 -1v1m9 -1v1m3 -1v1m5 0v1m2 -2v1m2 -1v1m2 -1v1m1 -1v1m1 -1v1m5 -1v1m1 -1v1m3 -1v1m0 0v1m3 -2v1m4 -1v1m4 -1v1m3 0v1m1 -1v1m2 -2v1m5 -1v1m2 -1v1m6 -1v1m1 -1v1m4 -1v1m7 -1v1m2 0v1m1 -2v1m2 -1v1m2 -1v1m2 -1v1m5 -1v1m2 0v1m1 -2v1m1 -1v1m0 0v1m1 -2v1m2 -1v1m1 -1v1m5 -1v1m3 0v1m4 -1v1m6 -2v1m1 -1v1" stroke="#ffd800" stroke-width="1" fill="none"/><path d="M0.5 0m119 552v1m2 -1v1m1 -1v1m1 -1v1m5 -1v1m2 -1v1m1 -1v1m4 -1v1m2 -1v1m1 -1v1m4 -1v1m1 -1v1m1 -1v1m3 -2v1m1 0v1m1 -1v1m5 -1v1m1 -1v1m2 -1v1m0 0v1m2 -2v1m1 -2v1m0 0v1m1 -1v1m1 -2v1m1 0v1m1 -1v1m1 -1v1m2 -1v1m1 -1v1m3 -1v1m2 -1v1m8 -1v1m1 0v1m1 -2v1m1 -1v1m3 -1v1m3 -1v1m1 -1v1m1 -1v1m7 -1v1m5 -1v1m1 -1v1m1 -1v1m4 -2v1m0 0v1m1 -1v1m1 -1v1m2 -1v1m4 -1v1m1 -2v1m5 -1v1m2 0v1m1 -1v1m4 -1v1m6 -1v1m2 -1v1m1 -1v1m1 -1v1m4 -1v1m3 -2v1m0 0v1m1 -1v1m2 -1v1m2 -1v1m1 -2v1m0 0v1m4 -1v1m2 0v1m1 -2v1m1 -1v1m9 -1v1m2 -1v1m3 -1v1m0 0v1m1 -2v1m3 -1v1m1 -1v1m1 -1v1m1 -1v1m4 -1v1m3 -1v1m1 0v1m1 -3v1m0 0v1m1 0v1m3 -2v1m1 -1v1m2 -1v1m5 -1v1m1 -1v1m7 -1v1m3 -1v1m2 -1v1m9 -1v1m1 -1v1m2 -2v1m0 0v1m2 -1v1m1 -1v1m2 -1v1m3 -1v1m1 -1v1m2 -1v1m1 -1v1m4 -1v1m4 -2v1m0 0v1m2 -1v1m2 -1v1m1 -1v1m1 -1v1m3 -1v1m3 -1v1m1 -1v1m3 -1v1m2 -1v1m2 -2v1m0 0v1m2 -1v1m1 -1v1m9 -1v1m1 -1v1m0 0v1m1 -2v1m1 -1v1m1 -1v1m1 -1v1m2 -1v1m2 -1v1m1 -2v1m1 0v1m1 -1v1m1 -1v1m0 0v1m1 -2v1m1 -1v1m2 -1v1m1 -2v1m0 0v1m2 -1v1m6 -1v1m1 -1v1m1 -1v1m2 -1v1m1 0v1m4 -2v1m1 -1v1m1 -1v1m1 -1v1m6 -1v1m2 -2v1m0 0v1m1 -1v1m1 -1v1m5 -1v1m1 -1v1m1 -2v1m5 0v1m1 -1v1m1 -2v1m1 0v1m4 -1v1m1 -1v1m2 -2v1m0 0v1m6 -1v1m2 -1v1m6 -1v1m1 -1v1m2 -1v1m2 -1v1m1 -1v1m3 -1v1m2 -1v1m1 -1v1m0 0v1m2 -2v1m1 -1v1m1 -1v1m3 0v1m2 -2v1m2 -1v1m1 -1v1m4 -1v1m5 -1v1m1 -1v1m3 -1v1m1 0v1m1 -2v1m1 -1v1m5 -1v1m1 -2v1m0 0v1m1 -1v1m2 -1v1m3 -1v1m1 0v1m1 -2v1m1 -1v1m2 -1v1m3 -1v1m2 -1v1m5 -1v1m1 -1v1m4 -2v1m1 0v1m1 -1v1m1 -1v1m1 -1v1m1 -1v1m2 -1v1m1 -1v1m2 -1v1m1 -1v1m2 -1v1m1 -1v1m2 -1v1m1 -1v1m1 -1v1m3 -1v1m2 -1v1m2 -1v1m1 -2v1m3 0v1m9 -1v1m2 -1v1m2 -2v1m5 0v1m2 -1v1m3 -1v1m2 -1v1m1 -1v1m3 0v1m2 -2v1m8 -1v1m2 -1v1m0 0v1m1 -2v1m1 -1v1m4 -1v1m1 -1v1m0 0v1m7 -2v1m2 -1v1m1 -1v1m1 -1v1m1 -1v1m3 -1v1m3 -2v1m0 0v1m3 -1v1m1 -1v1m1 -1v1m3 -1v1m2 -1v1m3 -1v1m1 -1v1m2 -1v1m2 -1v1m8 -1v1m1 -1v1m1 -1v1m5 -1v1m1 -1v1m2 -1v1m3 -1v1m2 -1v1m1 -2v1m0 0v1m0 0v1m3 -2v1m4 -1v1m4 -1v1m1 -1v1m12 -1v1m2 -1v1m1 -1v1m3 -1v1m0 0v1m2 -2v1m1 -1v1m1 -1v1m1 -1v1m1 -1v1m2 -1v1m9 -1v1m2 -1v1m2 -1v1m8 -2v1m0 0v1m4 -1v1m2 -1v1m2 -1v1" stroke="#ff9800" stroke-width="1" fill="none"/><path d="M0.5 0m118 552v1m0 0v1m6 -2v1m1 -1v1m1 -1v1m0 0v1m1 -2v1m0 0v1m2 -2v1m3 -1v1m1 -1v1m3 -1v1m3 -1v1m1 -1v1m1 -1v1m0 0v1m5 -2v1m0 0v1m1 -2v1m2 0v1m2 -2v1m1 -1v1m1 -1v1m2 0v1m4 -1v1m2 -1v1m1 -2v1m4 -1v1m1 0v1m1 -1v1m1 -2v1m1 -1v1m0 0v1m2 -2v1m2 -1v1m0 0v1m1 -2v1m1 -1v1m1 -1v1m1 -1v1m0 0v1m1 -2v1m1 -1v1m5 -1v1m0 0v1m2 -1v1m1 -2v1m0 0v1m1 -2v1m1 0v1m5 -2v1m1 -1v1m1 -1v1m1 -1v1m2 -1v1m2 -1v1m1 -1v1m0 0v1m1 -1v1m4 -2v1m1 0v1m2 -1v1m2 -2v1m2 -1v1m1 -1v1m0 0v1m1 -2v1m1 0v1m2 -2v1m1 -1v1m1 -1v1m1 -1v1m1 -1v1m1 -1v1m1 0v1m3 -2v1m1 0v1m3 -2v1m1 -1v1m1 -1v1m0 0v1m1 -2v1m5 0v1m1 -2v1m1 -1v1m4 -1v1m3 -1v1m3 0v1m2 -2v1m2 -1v1m2 -1v1m1 -1v1m1 0v1m2 -2v1m1 -1v1m1 -1v1m0 0v1m1 -2v1m0 0v1m1 -2v1m1 0v1m1 -1v1m1 -2v1m2 -1v1m1 0v1m1 -2v1m1 -1v1m3 -1v1m1 -1v1m5 -1v1m1 -1v1m1 -1v1m0 0v1m1 -1v1m1 -2v1m1 -1v1m0 0v1m2 -2v1m2 -1v1m1 -1v1m2 0v1m2 -2v1m0 0v1m2 -2v1m1 -1v1m1 -1v1m1 -1v1m0 0v1m3 -2v1m0 0v1m1 -2v1m0 0v1m1 -2v1m1 -1v1m1 -1v1m1 -1v1m2 -1v1m0 0v1m1 -2v1m2 -1v1m1 0v1m1 -2v1m2 -1v1m0 0v1m1 -2v1m2 -1v1m1 -1v1m1 -1v1m0 0v1m2 -1v1m1 -2v1m2 -1v1m0 0v1m5 -2v1m0 0v1m1 -2v1m1 0v1m5 -2v1m0 0v1m1 -2v1m1 -1v1m0 0v1m2 -2v1m2 -1v1m2 -1v1m2 -1v1m0 0v1m2 -1v1m2 -2v1m1 -1v1m0 0v1m2 -2v1m1 -1v1m0 0v1m1 -1v1m2 -2v1m1 -1v1m4 -1v1m1 0v1m1 -2v1m3 -1v1m0 0v1m1 -2v1m1 -1v1m1 -1v1m0 0v1m2 -2v1m1 -1v1m0 0v1m1 -2v1m0 0v1m1 -1v1m4 -1v1m2 -2v1m0 0v1m2 -1v1m1 -1v1m3 -1v1m3 -1v1m1 -2v1m1 0v1m1 -1v1m1 -2v1m0 0v1m2 -2v1m1 -1v1m1 -1v1m1 -1v1m3 0v1m1 -1v1m1 -2v1m0 0v1m3 -2v1m1 -1v1m1 -1v1m0 0v1m1 -1v1m3 -1v1m1 -2v1m1 -1v1m0 0v1m1 -1v1m1 -2v1m1 -1v1m2 -1v1m4 -1v1m0 0v1m1 -1v1m1 -2v1m1 -1v1m3 -1v1m2 -1v1m0 0v1m1 -2v1m1 0v1m3 -2v1m2 -1v1m1 -1v1m1 -1v1m2 0v1m2 -1v1m1 -2v1m1 -1v1m1 -1v1m1 -1v1m1 -1v1m4 -1v1m1 -1v1m0 0v1m1 -2v1m0 0v1m1 -2v1m1 -1v1m3 -1v1m1 0v1m2 -1v1m1 -1v1m1 -2v1m0 0v1m1 -2v1m0 0v1m2 -2v1m3 0v1m4 -2v1m0 0v1m1 -2v1m0 0v1m1 -2v1m1 0v1m2 -2v1m1 0v1m1 -1v1m1 -2v1m2 -1v1m2 -1v1m1 -1v1m0 0v1m2 -2v1m3 0v1m1 -2v1m0 0v1m2 -2v1m2 0v1m1 -1v1m1 -2v1m0 0v1m2 -2v1m4 -1v1m2 -1v1m1 -1v1m1 0v1m1 -2v1m3 -1v1m1 0v1m1 -2v1m1 -1v1m2 -1v1m1 0v1m1 -2v1m1 -1v1m1 -1v1m0 0v1m1 -2v1m0 0v1m1 -1v1m1 -1v1m1 -2v1m1 -1v1m1 -1v1m1 -1v1m2 0v1m4 -2v1m0 0v1m1 -1v1m2 -2v1m1 0v1m1 -1v1m1 -2v1m2 0v1m1 -2v1m2 0v1m3 -1v1m2 -2v1m2 -1v1m2 -1v1m2 -1v1m2 -1v1m1 -1v1m1 -1v1m1 -1v1m0 0v1m1 -2v1m1 -1v1m0 0v1m1 -2v1m0 0v1m1 -2v1m2 -1v1m2 -1v1m0 0v1m1 -2v1m1 0v1m1 -2v1m1 -1v1m1 -1v1m2 -1v1m1 0v1m1 -2v1m0 0v1m1 -2v1m0 0v1m1 -1v1m1 -2v1m0 0v1m3 -2v1m0 0v1m3 -1v1m3 -2v1m1 -1v1m2 -1v1m1 -1v1m1 -1v1m2 -1v1m4 -1v1m2 -1v1m0 0v1m3 -2v1m1 -1v1m1 -1v1m1 -1v1m0 0v1m1 -2v1m0 0v1m1 -2v1m1 0v1m1 -2v1m0 0v1m4 -1v1m1 -2v1m1 -1v1m1 0v1m1 -2v1m1 -1v1m1 0v1m1 -2v1m0 0v1m1 -2v1m7 -1v1m0 0v1m1 -1v1m2 -2v1m3 -1v1m1 0v1m1 -1v1m1 -1v1m1 -1v1m2 -2v1m1 -1v1m3 -1v1m2 0v1m2 -2v1m1 -1v1m1 -1v1m1 -1v1m3 0v1m1 -1v1m3 -1v1m1 -2v1m0 0v1m1 -1v1m2 -2v1m1 -1v1m2 -1v1m1 -1v1m1 -1v1m2 -1v1m1 -1v1m1 -1v1m1 0v1m1 -1v1m1 -2v1m1 -1v1m0 0v1m1 -2v1m0 0v1m1 -2v1m0 0v1m1 -2v1m0 0v1m1 -2v1m0 0v1m1 -2v1m1 -1v1m1 0v1m1 -2v1m1 -1v1m3 0v1m3 -2v1m2 -1v1m1 0v1m5 -2v1m0 0v1m3 -2v1m0 0v1m1 -1v1m1 -2v1m1 -1v1m1 0v1m1 -2v1m0 0v1m5 -2v1m0 0v1m2 -2v1m2 -1v1m1 0v1m2 -1v1m1 -1v1m1 -1v1m1 -2v1m1 -1v1m1 -1v1m1 0v1m1 -2v1m0 0v1m1 -1v1m1 -2v1m0 0v1" stroke="#ff5010" stroke-width="1" fill="none"/><path d="M0.5 0m119 553v1m1 -2v1m0 0v1m1 -1v1m1 -1v1m1 -1v1m1 -1v1m1 -1v1m3 -1v1m1 -1v1m1 -1v1m1 -1v1m1 -1v1m1 -1v1m1 -2v1m0 0v1m1 -1v1m1 -1v1m1 -1v1m1 -1v1m1 -1v1m1 -1v1m2 -1v1m1 -1v1m1 -1v1m1 -2v1m0 0v1m2 -1v1m1 -1v1m2 -2v1m0 0v1m1 -1v1m1 -1v1m1 -1v1m1 -1v1m2 -2v1m0 0v1m2 -1v1m2 -1v1m2 -1v1m1 -1v1m1 -1v1m1 -1v1m1 -1v1m3 -1v1m2 -1v1m1 -1v1m1 -1v1m2 -1v1m1 -1v1m1 -1v1m2 -1v1m1 -1v1m1 -1v1m2 -1v1m1 -1v1m2 -1v1m3 -1v1m2 -1v1m1 -1v1m1 -2v1m0 0v1m1 -1v1m1 -1v1m1 -1v1m1 -1v1m1 -1v1m1 -1v1m1 -1v1m1 -2v1m0 0v1m1 -1v1m3 -1v1m1 -1v1m1 -1v1m1 -1v1m1 -2v1m1 0v1m2 -1v1m1 -1v1m1 -1v1m1 -1v1m2 -1v1m2 -2v1m0 0v1m1 -1v1m1 -1v1m1 -1v1m1 -1v1m1 -1v1m1 -1v1m2 -1v1m1 -1v1m1 -1v1m1 -2v1m1 0v1m1 -2v1m0 0v1m1 -1v1m1 -1v1m2 -1v1m1 -1v1m1 -1v1m1 -1v1m1 -1v1m2 -1v1m1 -1v1m1 -2v1m0 0v1m1 -1v1m1 -1v1m1 -1v1m1 -1v1m1 -1v1m1 -1v1m1 -1v1m1 -2v1m0 0v1m2 -1v1m1 -1v1m1 -2v1m0 0v1m1 -1v1m1 -1v1m1 -1v1m3 -1v1m1 -1v1m1 -1v1m3 -1v1m3 -1v1m1 -1v1m1 -1v1m2 -1v1m1 -1v1m2 -1v1m1 -1v1m1 -1v1m1 -1v1m1 -1v1m1 -1v1m1 -1v1m1 -1v1m1 -1v1m3 -1v1m2 -1v1m2 -1v1m2 -1v1m1 -2v1m0 0v1m2 -1v1m2 -1v1m1 -1v1m1 -1v1m1 -1v1m2 -1v1m1 -1v1m3 -1v1m1 -1v1m1 -1v1m1 -1v1m1 -1v1m2 -1v1m1 -1v1m1 -1v1m2 -1v1m1 -1v1m2 -1v1m1 -2v1m0 0v1m1 -1v1m1 -1v1m2 -1v1m2 -1v1m1 -1v1m2 -1v1m1 -1v1m1 -2v1m0 0v1m1 -1v1m2 -1v1m2 -1v1m1 -2v1m0 0v1m1 -1v1m1 -1v1m2 -1v1m2 -1v1m1 -1v1m1 -2v1m0 0v1m1 -1v1m1 -1v1m1 -1v1m1 -1v1m2 -1v1m2 -1v1m1 -1v1m2 -1v1m1 -1v1m3 -1v1m1 -1v1m1 -1v1m1 -1v1m1 -2v1m0 0v1m1 -1v1m1 -1v1m2 -1v1m1 -1v1m1 -1v1m2 -1v1m1 -1v1m2 -2v1m0 0v1m1 -1v1m5 -1v1m1 -1v1m2 -1v1m2 -1v1m3 -1v1m1 -1v1m3 -1v1m2 -1v1m4 -1v1m1 -1v1m1 -1v1m1 -1v1m1 -1v1m1 -2v1m0 0v1m1 -1v1m4 -1v1m2 -1v1m1 -1v1m3 -1v1m1 -1v1m2 -1v1m3 -1v1m1 -1v1m1 -1v1m1 -1v1m1 -1v1m1 -1v1m1 -1v1m2 -2v1m1 0v1m1 -1v1m1 -1v1m1 -1v1m1 -1v1m1 -2v1m0 0v1m2 -1v1m2 -1v1m1 -1v1m1 -1v1m1 -1v1m1 -1v1m1 -1v1m1 -1v1m1 -1v1m2 -2v1m0 0v1m2 -1v1m1 -1v1m1 -1v1m1 -1v1m1 -1v1m1 -1v1m1 -1v1m1 -1v1m1 -1v1m3 -1v1m1 -1v1m1 -1v1m1 -1v1m1 -1v1m2 -1v1m5 -1v1m1 -1v1m1 -1v1m3 -1v1m1 -1v1m1 -1v1m4 -2v1m1 0v1m1 -1v1m3 -1v1m1 -1v1m1 -1v1m1 -1v1m1 -1v1m2 -1v1m1 -1v1m1 -1v1m1 -1v1m1 -2v1m2 0v1m2 -1v1m4 -1v1m1 -1v1m1 -1v1m1 -1v1m1 -1v1m1 -1v1m1 -1v1m1 -1v1m1 -1v1m3 -1v1m1 -1v1m1 -1v1m2 -1v1m1 -1v1m1 -1v1m1 -1v1m2 -1v1m1 -1v1m5 -1v1m1 -1v1m1 -1v1m1 -1v1m1 -1v1m2 -1v1m1 -1v1m1 -1v1m3 -1v1m1 -1v1m3 -1v1m1 -1v1m2 -1v1m1 -1v1m2 -1v1m1 -2v1m0 0v1m2 -1v1m1 -1v1m1 -1v1m1 -1v1m1 -1v1m1 -1v1m1 -1v1m1 -1v1m1 -1v1m1 -1v1m1 -1v1m1 -1v1m2 -1v1m3 -1v1m1 -1v1m1 -1v1m1 -1v1m2 -1v1m1 -2v1m1 0v1m1 -1v1m1 -1v1m1 -1v1m1 -1v1m6 -1v1m1 -1v1m2 -2v1m0 0v1m2 -2v1m1 0v1m1 -1v1m1 -1v1m1 -1v1m1 -1v1m1 -1v1m1 -1v1m1 -1v1m1 -1v1m1 -1v1m2 -1v1m1 -1v1m1 -1v1m1 -2v1m0 0v1m2 -1v1m2 -1v1m1 -1v1m1 -1v1m3 -1v1m3 -1v1m1 -1v1m1 -1v1m2 -1v1m1 -1v1m2 -1v1m1 -1v1m3 -1v1m1 -1v1m1 -1v1m1 -1v1m1 -1v1m1 -2v1m0 0v1m1 -1v1m3 -2v1m0 0v1m1 -1v1m1 -1v1m1 -1v1m1 -1v1m2 -2v1m2 -1v1m1 -1v1m0 0v1m1 -1v1m1 -1v1m1 -1v1m1 -2v1m0 0v1m1 -1v1m1 -1v1m2 -1v1m1 -1v1m1 -1v1m1 -1v1m1 -1v1m1 -1v1m1 -1v1m1 -2v1m2 0v1m1 -1v1m5 -1v1m1 -1v1m1 -1v1m1 -1v1m1 -1v1m1 -1v1m1 -1v1m1 -1v1m1 -1v1m1 -1v1m3 -1v1m6 -1v1m1 -1v1m1 -2v1m1 0v1m1 -1v1m1 -1v1m1 -1v1m2 -1v1m1 -2v1m0 0v1m1 -1v1m2 -1v1m2 -1v1m1 -1v1m1 -1v1m1 -1v1m2 -1v1m1 -1v1m3 -1v1m1 -1v1m1 -2v1m2 -1v1m0 0v1m1 -1v1m1 -2v1m0 0v1m1 -1v1m2 -1v1m1 -1v1m1 -1v1m1 -1v1m1 -2v1m1 -1v1m0 0v1m2 -2v1m2 0v1m1 -1v1m1 -1v1m5 -1v1" stroke="#e00010" stroke-width="1" fill="none"/><rect x="113" y="554" width="630" height="1" fill="#100000"/><rect x="140" y="555" width="1" height="2" fill="#000"/><rect x="161" y="555" width="1" height="2" fill="#000"/><rect x="182" y="555" width="1" height="2" fill="#000"/><rect x="204" y="555" width="1" height="3" fill="#000"/><rect x="226" y="555" width="1" height="2" fill="#000"/><rect x="247" y="555" width="1" height="2" fill="#000"/><rect x="268" y="555" width="1" height="2" fill="#000"/><rect x="290" y="555" width="1" height="3" fill="#000"/><rect x="312" y="555" width="1" height="2" fill="#000"/><rect x="333" y="555" width="1" height="2" fill="#000"/><rect x="354" y="555" width="1" height="2" fill="#000"/><rect x="376" y="555" width="1" height="3" fill="#000"/><rect x="398" y="555" width="1" height="2" fill="#000"/><rect x="419" y="555" width="1" height="2" fill="#000"/><rect x="440" y="555" width="1" height="2" fill="#000"/><rect x="462" y="555" width="1" height="3" fill="#000"/><rect x="484" y="555" width="1" height="2" fill="#000"/><rect x="505" y="555" width="1" height="2" fill="#000"/><rect x="526" y="555" width="1" height="2" fill="#000"/><rect x="548" y="555" width="1" height="3" fill="#000"/><rect x="570" y="555" width="1" height="2" fill="#000"/><rect x="591" y="555" width="1" height="2" fill="#000"/><rect x="612" y="555" width="1" height="2" fill="#000"/><rect x="634" y="555" width="1" height="3" fill="#000"/><rect x="656" y="555" width="1" height="2" fill="#000"/><rect x="677" y="555" width="1" height="2" fill="#000"/><rect x="698" y="555" width="1" height="2" fill="#000"/><rect x="720" y="555" width="1" height="3" fill="#000"/><rect x="742" y="555" width="1" height="2" fill="#000"/><rect x="118" y="465" width="1" height="88" fill="#10a0f8" fill-opacity="1"/><rect x="118" y="520" width="1" height="33" fill="#20d0f8" fill-opacity="1"/><rect x="119" y="408" width="1" height="57" fill="#10109a" fill-opacity="0.7"/><rect x="309" y="395" width="1" height="45" fill="#1048e0" fill-opacity="0.9"/><rect x="309" y="440" width="1" height="113" fill="#10a0f8" fill-opacity="0.85"/><rect x="309" y="505" width="1" height="48" fill="#20d0f8" fill-opacity="0.8"/><rect x="648" y="425" width="1" height="78" fill="#10109a" fill-opacity="1"/><rect x="663" y="322" width="1" height="118" fill="#10109a" fill-opacity="0.9"/><rect x="663" y="325" width="1" height="10" fill="#10a0f8" fill-opacity="0.8"/><rect x="663" y="420" width="1" height="13" fill="#10a0f8" fill-opacity="0.8"/><path d="M126.5 386 L127 400" stroke="#10109a" stroke-width="1.0" fill="none" stroke-opacity="0.9" stroke-linecap="round" stroke-linejoin="round" shape-rendering="auto"/><path d="M127 400 L129 405 L132.5 398 L133 383" stroke="#1048e0" stroke-width="2.0" fill="none" stroke-opacity="0.45" stroke-linecap="round" stroke-linejoin="round" shape-rendering="auto"/><path d="M132.8 385 L132.5 397" stroke="#10a0f8" stroke-width="1.1" fill="none" stroke-opacity="1" stroke-linecap="round" stroke-linejoin="round" shape-rendering="auto"/><path d="M127.5 401 L129 405 L132.5 398" stroke="#20d0f8" stroke-width="1.5" fill="none" stroke-opacity="1" stroke-linecap="round" stroke-linejoin="round" shape-rendering="auto"/><path d="M186.5 392 L187 398" stroke="#10109a" stroke-width="1.0" fill="none" stroke-opacity="0.9" stroke-linecap="round" stroke-linejoin="round" shape-rendering="auto"/><path d="M187 398 L189 403 L192.5 396 L193 381" stroke="#1048e0" stroke-width="2.0" fill="none" stroke-opacity="0.45" stroke-linecap="round" stroke-linejoin="round" shape-rendering="auto"/><path d="M192.8 383 L192.5 395" stroke="#10a0f8" stroke-width="1.1" fill="none" stroke-opacity="1" stroke-linecap="round" stroke-linejoin="round" shape-rendering="auto"/><path d="M187.5 399 L189 403 L192.5 396" stroke="#40f0c0" stroke-width="1.5" fill="none" stroke-opacity="1" stroke-linecap="round" stroke-linejoin="round" shape-rendering="auto"/><path d="M253.5 398 L254 400" stroke="#10109a" stroke-width="1.0" fill="none" stroke-opacity="0.9" stroke-linecap="round" stroke-linejoin="round" shape-rendering="auto"/><path d="M254 400 L256 405 L259.5 398 L260 388" stroke="#1048e0" stroke-width="2.0" fill="none" stroke-opacity="0.45" stroke-linecap="round" stroke-linejoin="round" shape-rendering="auto"/><path d="M259.8 390 L259.5 397" stroke="#10a0f8" stroke-width="1.1" fill="none" stroke-opacity="1" stroke-linecap="round" stroke-linejoin="round" shape-rendering="auto"/><path d="M254.5 401 L256 405 L259.5 398" stroke="#20d0f8" stroke-width="1.5" fill="none" stroke-opacity="1" stroke-linecap="round" stroke-linejoin="round" shape-rendering="auto"/><path d="M337.5 392 L338 398" stroke="#10109a" stroke-width="1.0" fill="none" stroke-opacity="0.9" stroke-linecap="round" stroke-linejoin="round" shape-rendering="auto"/><path d="M338 398 L340 403 L343.5 396 L344 385" stroke="#1048e0" stroke-width="2.0" fill="none" stroke-opacity="0.45" stroke-linecap="round" stroke-linejoin="round" shape-rendering="auto"/><path d="M343.8 387 L343.5 395" stroke="#10a0f8" stroke-width="1.1" fill="none" stroke-opacity="1" stroke-linecap="round" stroke-linejoin="round" shape-rendering="auto"/><path d="M338.5 399 L340 403 L343.5 396" stroke="#40f0c0" stroke-width="1.5" fill="none" stroke-opacity="1" stroke-linecap="round" stroke-linejoin="round" shape-rendering="auto"/><path d="M436.5 382 L437 398" stroke="#10109a" stroke-width="1.0" fill="none" stroke-opacity="0.9" stroke-linecap="round" stroke-linejoin="round" shape-rendering="auto"/><path d="M437 398 L439 403 L442.5 396 L443 396" stroke="#1048e0" stroke-width="2.0" fill="none" stroke-opacity="0.45" stroke-linecap="round" stroke-linejoin="round" shape-rendering="auto"/><path d="M442.8 398 L442.5 395" stroke="#10a0f8" stroke-width="1.1" fill="none" stroke-opacity="1" stroke-linecap="round" stroke-linejoin="round" shape-rendering="auto"/><path d="M437.5 399 L439 403 L442.5 396" stroke="#20d0f8" stroke-width="1.5" fill="none" stroke-opacity="1" stroke-linecap="round" stroke-linejoin="round" shape-rendering="auto"/><path d="M555.5 383 L556 400" stroke="#10109a" stroke-width="1.0" fill="none" stroke-opacity="0.9" stroke-linecap="round" stroke-linejoin="round" shape-rendering="auto"/><path d="M556 400 L558 405 L561.5 398 L562 395" stroke="#1048e0" stroke-width="2.0" fill="none" stroke-opacity="0.45" stroke-linecap="round" stroke-linejoin="round" shape-rendering="auto"/><path d="M561.8 397 L561.5 397" stroke="#10a0f8" stroke-width="1.1" fill="none" stroke-opacity="1" stroke-linecap="round" stroke-linejoin="round" shape-rendering="auto"/><path d="M556.5 401 L558 405 L561.5 398" stroke="#10a0f8" stroke-width="1.5" fill="none" stroke-opacity="1" stroke-linecap="round" stroke-linejoin="round" shape-rendering="auto"/><path d="M624.5 389 L625 398" stroke="#10109a" stroke-width="1.0" fill="none" stroke-opacity="0.9" stroke-linecap="round" stroke-linejoin="round" shape-rendering="auto"/><path d="M625 398 L627 403 L630.5 396 L631 383" stroke="#1048e0" stroke-width="2.0" fill="none" stroke-opacity="0.45" stroke-linecap="round" stroke-linejoin="round" shape-rendering="auto"/><path d="M630.8 385 L630.5 395" stroke="#10a0f8" stroke-width="1.1" fill="none" stroke-opacity="1" stroke-linecap="round" stroke-linejoin="round" shape-rendering="auto"/><path d="M625.5 399 L627 403 L630.5 396" stroke="#40f0c0" stroke-width="1.5" fill="none" stroke-opacity="1" stroke-linecap="round" stroke-linejoin="round" shape-rendering="auto"/><path d="M714.5 387 L715 404" stroke="#10109a" stroke-width="1.0" fill="none" stroke-opacity="0.9" stroke-linecap="round" stroke-linejoin="round" shape-rendering="auto"/><path d="M715 404 L717 409 L720.5 402 L721 402" stroke="#1048e0" stroke-width="2.0" fill="none" stroke-opacity="0.45" stroke-linecap="round" stroke-linejoin="round" shape-rendering="auto"/><path d="M720.8 404 L720.5 401" stroke="#10a0f8" stroke-width="1.1" fill="none" stroke-opacity="1" stroke-linecap="round" stroke-linejoin="round" shape-rendering="auto"/><path d="M715.5 405 L717 409 L720.5 402" stroke="#20d0f8" stroke-width="1.5" fill="none" stroke-opacity="1" stroke-linecap="round" stroke-linejoin="round" shape-rendering="auto"/><path d="M267.5 385 L268 396" stroke="#10a0f8" stroke-width="1.3" fill="none" stroke-opacity="1" stroke-linecap="round" stroke-linejoin="round" shape-rendering="auto"/><path d="M274 379 L274 392" stroke="#10a0f8" stroke-width="1.2" fill="none" stroke-opacity="1" stroke-linecap="round" stroke-linejoin="round" shape-rendering="auto"/><path d="M449 380 L450 398" stroke="#1048e0" stroke-width="1.3" fill="none" stroke-opacity="1" stroke-linecap="round" stroke-linejoin="round" shape-rendering="auto"/><path d="M456.5 385 L456.5 396" stroke="#10a0f8" stroke-width="1.2" fill="none" stroke-opacity="1" stroke-linecap="round" stroke-linejoin="round" shape-rendering="auto"/><path d="M261 372 L260.8 390" stroke="#10109a" stroke-width="1.2" fill="none" stroke-opacity="0.8" stroke-linecap="round" stroke-linejoin="round" shape-rendering="auto"/><path d="M128 474 L129 480 L132 475 L132.5 467" stroke="#1048e0" stroke-width="2.2" fill="none" stroke-opacity="0.6" stroke-linecap="round" stroke-linejoin="round" shape-rendering="auto"/><path d="M129 478 L132 475 L132.5 470" stroke="#10a0f8" stroke-width="1.2" fill="none" stroke-opacity="1" stroke-linecap="round" stroke-linejoin="round" shape-rendering="auto"/><path d="M189 474 L190 480 L193 475 L193.5 438" stroke="#1048e0" stroke-width="2.2" fill="none" stroke-opacity="0.6" stroke-linecap="round" stroke-linejoin="round" shape-rendering="auto"/><path d="M190 478 L193 475 L193.5 441" stroke="#10a0f8" stroke-width="1.2" fill="none" stroke-opacity="1" stroke-linecap="round" stroke-linejoin="round" shape-rendering="auto"/><path d="M340 472 L341 478 L344 473 L344.5 467" stroke="#1048e0" stroke-width="2.2" fill="none" stroke-opacity="0.6" stroke-linecap="round" stroke-linejoin="round" shape-rendering="auto"/><path d="M341 476 L344 473 L344.5 470" stroke="#10a0f8" stroke-width="1.2" fill="none" stroke-opacity="1" stroke-linecap="round" stroke-linejoin="round" shape-rendering="auto"/><path d="M438 473 L439 479 L442 474 L442.5 467" stroke="#1048e0" stroke-width="2.2" fill="none" stroke-opacity="0.6" stroke-linecap="round" stroke-linejoin="round" shape-rendering="auto"/><path d="M439 477 L442 474 L442.5 470" stroke="#10a0f8" stroke-width="1.2" fill="none" stroke-opacity="1" stroke-linecap="round" stroke-linejoin="round" shape-rendering="auto"/><path d="M626 473 L627 479 L630 474 L630.5 467" stroke="#1048e0" stroke-width="2.2" fill="none" stroke-opacity="0.6" stroke-linecap="round" stroke-linejoin="round" shape-rendering="auto"/><path d="M627 477 L630 474 L630.5 470" stroke="#10a0f8" stroke-width="1.2" fill="none" stroke-opacity="1" stroke-linecap="round" stroke-linejoin="round" shape-rendering="auto"/><path d="M223 423 L223 455" stroke="#10a0f8" stroke-width="1.2" fill="none" stroke-opacity="1" stroke-linecap="round" stroke-linejoin="round" shape-rendering="auto"/><path d="M223 455 L223 483" stroke="#10109a" stroke-width="1" fill="none" stroke-opacity="0.8" stroke-linecap="round" stroke-linejoin="round" shape-rendering="auto"/><path d="M169 423 L169 447" stroke="#10109a" stroke-width="1" fill="none" stroke-opacity="0.9" stroke-linecap="round" stroke-linejoin="round" shape-rendering="auto"/><path d="M129 433 L129 447" stroke="#10109a" stroke-width="1" fill="none" stroke-opacity="0.9" stroke-linecap="round" stroke-linejoin="round" shape-rendering="auto"/><path d="M260 435 L260 480" stroke="#10109a" stroke-width="1.2" fill="none" stroke-opacity="1" stroke-linecap="round" stroke-linejoin="round" shape-rendering="auto"/><path d="M260 455 L260 470" stroke="#1048e0" stroke-width="1.1" fill="none" stroke-opacity="1" stroke-linecap="round" stroke-linejoin="round" shape-rendering="auto"/><path d="M266.6 452 L266.6 475" stroke="#1048e0" stroke-width="1.0" fill="none" stroke-opacity="1" stroke-linecap="round" stroke-linejoin="round" shape-rendering="auto"/><path d="M273 458 L273 475" stroke="#1048e0" stroke-width="1.0" fill="none" stroke-opacity="1" stroke-linecap="round" stroke-linejoin="round" shape-rendering="auto"/><path d="M436 467 L438 479" stroke="#1048e0" stroke-width="1.3" fill="none" stroke-opacity="1" stroke-linecap="round" stroke-linejoin="round" shape-rendering="auto"/><path d="M449 470 L449 478" stroke="#10a0f8" stroke-width="1.1" fill="none" stroke-opacity="1" stroke-linecap="round" stroke-linejoin="round" shape-rendering="auto"/><path d="M561 465 L561 480" stroke="#1048e0" stroke-width="1.2" fill="none" stroke-opacity="0.9" stroke-linecap="round" stroke-linejoin="round" shape-rendering="auto"/><path d="M624 462 L625 476" stroke="#1048e0" stroke-width="1.2" fill="none" stroke-opacity="1" stroke-linecap="round" stroke-linejoin="round" shape-rendering="auto"/><path d="M717 476 L719 480" stroke="#1048e0" stroke-width="2" fill="none" stroke-opacity="0.7" stroke-linecap="round" stroke-linejoin="round" shape-rendering="auto"/><rect x="203" y="487" width="1" height="3" fill="#1048e0"/><rect x="203" y="486" width="2" height="2" fill="#1048e0"/><rect x="208" y="498" width="2" height="1" fill="#1048e0"/><rect x="198" y="495" width="2" height="2" fill="#10a0f8"/><rect x="204" y="492" width="1" height="1" fill="#10109a"/><rect x="199" y="496" width="2" height="1" fill="#10a0f8"/><rect x="206" y="492" width="2" height="2" fill="#10a0f8"/><rect x="206" y="498" width="1" height="2" fill="#10a0f8"/><rect x="200" y="494" width="2" height="2" fill="#10a0f8"/><rect x="200" y="498" width="2" height="1" fill="#1048e0"/><rect x="204" y="496" width="2" height="1" fill="#10109a"/><rect x="207" y="497" width="1" height="2" fill="#10109a"/><rect x="198" y="493" width="2" height="3" fill="#10109a"/><rect x="197" y="497" width="1" height="2" fill="#1048e0"/><rect x="374" y="491" width="1" height="1" fill="#10a0f8"/><rect x="380" y="499" width="1" height="1" fill="#1048e0"/><rect x="380" y="496" width="2" height="3" fill="#1048e0"/><rect x="372" y="495" width="2" height="1" fill="#1048e0"/><rect x="373" y="487" width="1" height="3" fill="#10109a"/><rect x="380" y="491" width="1" height="3" fill="#10a0f8"/><rect x="382" y="495" width="1" height="2" fill="#1048e0"/><rect x="374" y="497" width="2" height="3" fill="#10a0f8"/><rect x="371" y="497" width="1" height="2" fill="#10109a"/><rect x="380" y="487" width="1" height="1" fill="#1048e0"/><rect x="380" y="495" width="1" height="2" fill="#1048e0"/><rect x="381" y="494" width="1" height="1" fill="#10a0f8"/><rect x="371" y="493" width="2" height="1" fill="#1048e0"/><rect x="374" y="494" width="2" height="3" fill="#10109a"/><rect x="590" y="484" width="2" height="2" fill="#10109a"/><rect x="601" y="500" width="1" height="3" fill="#10109a"/><rect x="594" y="492" width="1" height="1" fill="#1048e0"/><rect x="602" y="488" width="1" height="1" fill="#10109a"/><rect x="601" y="496" width="2" height="3" fill="#10a0f8"/><rect x="591" y="486" width="1" height="1" fill="#1048e0"/><rect x="602" y="493" width="1" height="1" fill="#1048e0"/><rect x="601" y="500" width="2" height="3" fill="#10a0f8"/><rect x="596" y="495" width="1" height="2" fill="#10109a"/><rect x="592" y="488" width="2" height="3" fill="#10a0f8"/><rect x="594" y="483" width="1" height="3" fill="#10a0f8"/><rect x="594" y="496" width="1" height="3" fill="#1048e0"/><rect x="593" y="485" width="1" height="3" fill="#1048e0"/><rect x="597" y="502" width="1" height="1" fill="#10a0f8"/><path d="M16 8 L16 20.5 L22 18.5 L34 14.5 L34 13.5 L22 9.5 Z" fill="#000" shape-rendering="auto"/><rect x="59" y="8" width="14" height="12" fill="#000"/><rect x="99" y="8" width="14" height="9" fill="#000"/><rect x="100" y="9" width="12" height="7" fill="#fff"/><rect x="102" y="11" width="13" height="9" fill="#000"/><rect x="103" y="12" width="11" height="7" fill="#fff"/><rect x="98" y="11" width="1" height="1" fill="#000"/><rect x="98" y="14" width="1" height="1" fill="#000"/><rect x="104" y="20" width="1" height="1" fill="#000"/><rect x="108" y="20" width="1" height="1" fill="#000"/><rect x="112" y="20" width="1" height="1" fill="#000"/><rect x="106" y="14" width="4" height="1" fill="#000"/><rect x="105" y="15" width="1" height="1" fill="#000"/><rect x="110" y="15" width="1" height="1" fill="#000"/><rect x="106" y="16" width="4" height="1" fill="#000"/><rect x="105" y="17" width="1" height="1" fill="#000"/><rect x="110" y="17" width="1" height="1" fill="#000"/><rect x="125" y="7" width="14" height="14" fill="#000"/><rect x="127" y="9" width="10" height="10" fill="#000"/><rect x="128" y="8" width="8" height="5" fill="#d0d0d0"/><rect x="127" y="15" width="1" height="5" fill="#808080"/><rect x="136" y="15" width="1" height="5" fill="#808080"/><rect x="134" y="17" width="2" height="3" fill="#fff"/><rect x="137" y="8" width="1" height="1" fill="#fff"/><rect x="149" y="7" width="16" height="14" fill="#000"/><rect x="150" y="8" width="14" height="12" fill="#fff"/><rect x="151" y="9" width="3" height="3" fill="#000"/><rect x="151" y="12" width="3" height="3" fill="#808080"/><rect x="151" y="15" width="3" height="4" fill="#c0c0c0"/><path d="M155.5 18.5 L155.8 14 L157 11.5 L159.5 10 L162.5 9.3" stroke="#000" stroke-width="1.3" fill="none" shape-rendering="auto"/><rect x="174" y="7" width="16" height="14" fill="#000"/><rect x="175" y="8" width="14" height="12" fill="#fff"/><path d="M175.5 19.5 C178.5 17.5 180 9 182 9 C184 9 185.5 17.5 188.5 19.5 Z" fill="#909090" stroke="#000" stroke-width="1.1" shape-rendering="auto"/><rect x="204" y="8" width="15" height="13" fill="#000"/><rect x="205" y="9" width="13" height="11" fill="#fff"/><rect x="203" y="11" width="1" height="1" fill="#000"/><rect x="203" y="15" width="1" height="1" fill="#000"/><rect x="203" y="18" width="1" height="1" fill="#000"/><rect x="207" y="21" width="1" height="1" fill="#000"/><rect x="211" y="21" width="1" height="1" fill="#000"/><rect x="215" y="21" width="1" height="1" fill="#000"/><rect x="208" y="10" width="8" height="1" fill="#d02030"/><rect x="208" y="11" width="1" height="1" fill="#d02030"/><rect x="215" y="11" width="1" height="1" fill="#d02030"/><rect x="209" y="13" width="5" height="1" fill="#000"/><rect x="208" y="14" width="1" height="1" fill="#000"/><rect x="214" y="14" width="1" height="1" fill="#000"/><rect x="209" y="16" width="5" height="1" fill="#000"/><rect x="208" y="17" width="1" height="1" fill="#000"/><rect x="214" y="17" width="1" height="1" fill="#000"/><rect x="233" y="8" width="12" height="1" fill="#000"/><rect x="234" y="6" width="1" height="5" fill="#000"/><rect x="236" y="6" width="1" height="5" fill="#000"/><rect x="239" y="6" width="1" height="5" fill="#000"/><rect x="241" y="6" width="1" height="5" fill="#000"/><rect x="244" y="6" width="1" height="5" fill="#000"/><rect x="231" y="12" width="1" height="10" fill="#000"/><rect x="229" y="15" width="2" height="1" fill="#000"/><rect x="229" y="18" width="2" height="1" fill="#000"/><rect x="233" y="12" width="12" height="10" fill="#000"/><rect x="234" y="13" width="10" height="8" fill="#fff"/><rect x="236" y="15" width="4" height="1" fill="#000"/><rect x="235" y="16" width="1" height="1" fill="#000"/><rect x="240" y="16" width="1" height="1" fill="#000"/><rect x="236" y="18" width="4" height="1" fill="#000"/><rect x="235" y="19" width="1" height="1" fill="#000"/><rect x="240" y="19" width="1" height="1" fill="#000"/><rect x="255" y="9" width="14" height="10" fill="#000"/><rect x="256" y="10" width="12" height="8" fill="#fff"/><rect x="262" y="10" width="6" height="8" fill="#000"/><rect x="263" y="11" width="1" height="1" fill="#fff"/><rect x="265" y="11" width="1" height="1" fill="#fff"/><rect x="264" y="12" width="1" height="1" fill="#fff"/><rect x="266" y="12" width="1" height="1" fill="#fff"/><rect x="263" y="13" width="1" height="1" fill="#fff"/><rect x="265" y="13" width="1" height="1" fill="#fff"/><rect x="264" y="14" width="1" height="1" fill="#fff"/><rect x="266" y="14" width="1" height="1" fill="#fff"/><rect x="263" y="15" width="1" height="1" fill="#fff"/><rect x="265" y="15" width="1" height="1" fill="#fff"/><rect x="264" y="16" width="1" height="1" fill="#fff"/><rect x="266" y="16" width="1" height="1" fill="#fff"/><rect x="258" y="13" width="4" height="1" fill="#000"/><rect x="258" y="15" width="4" height="1" fill="#000"/><rect x="254" y="6" width="2" height="2" fill="#000"/><rect x="253" y="9" width="1" height="1" fill="#000"/><rect x="253" y="11" width="1" height="1" fill="#000"/><rect x="253" y="13" width="1" height="1" fill="#000"/><rect x="253" y="15" width="1" height="1" fill="#000"/><rect x="253" y="17" width="1" height="1" fill="#000"/><rect x="258" y="21" width="2" height="1" fill="#000"/><rect x="261" y="21" width="2" height="1" fill="#000"/><rect x="264" y="21" width="2" height="1" fill="#000"/><rect x="267" y="21" width="2" height="1" fill="#000"/><rect x="269" y="20" width="1" height="2" fill="#000"/><rect x="279" y="8" width="15" height="2" fill="#000"/><rect x="292" y="10" width="2" height="1" fill="#000"/><rect x="279" y="10" width="2" height="11" fill="#000"/><rect x="281" y="20" width="6" height="1" fill="#000"/><rect x="281" y="10" width="5" height="10" fill="#fff"/><rect x="286" y="9" width="1" height="12" fill="#1010b0"/><rect x="281" y="14" width="5" height="1" fill="#1010b0"/><rect x="279" y="11" width="1" height="1" fill="#000"/><rect x="279" y="15" width="1" height="1" fill="#000"/><rect x="279" y="18" width="1" height="1" fill="#000"/><rect x="281" y="20" width="1" height="1" fill="#000"/><rect x="285" y="20" width="1" height="1" fill="#000"/><text x="288" y="18.5" font-family="Liberation Sans" font-weight="bold" font-size="10" fill="#808080">S</text><rect x="308" y="7" width="11" height="6" fill="#000"/><rect x="309" y="8" width="9" height="4" fill="#fff"/><rect x="310" y="9" width="6" height="1" fill="#000"/><rect x="310" y="11" width="5" height="1" fill="#000"/><path d="M304.5 14.5 L306 12.5 L318 12.5 L320 14.5 L320 19 L318 21 L305 21 L304.5 20 Z" fill="#fff" stroke="#000" stroke-width="1.2" shape-rendering="auto"/><rect x="305" y="15" width="14" height="1" fill="#000"/><rect x="305" y="18" width="14" height="1" fill="#000"/><rect x="310" y="16" width="4" height="1" fill="#000"/><path d="M329.5 19.5 L329.5 10.5 L333 10.5 L334 11.5 L340 11.5 L340 14.5" fill="#fff" stroke="#000" stroke-width="1.4" shape-rendering="auto"/><path d="M330 19.5 L334.5 14.5 L345 14.5 L340 19.5 Z" fill="#808080" stroke="#000" stroke-width="1.3" shape-rendering="auto"/><path d="M337.5 9 Q340 6.5 343 8.5" stroke="#000" stroke-width="1.1" fill="none" shape-rendering="auto"/><path d="M341.5 9 L344.5 10.5 L344 7.5 Z" fill="#000" shape-rendering="auto"/><path d="M358.5 7.5 L355 11.5 L358.5 15.5" stroke="#000" stroke-width="1.3" fill="none" shape-rendering="auto"/><path d="M366.5 7.5 L370 11.5 L366.5 15.5" stroke="#000" stroke-width="1.3" fill="none" shape-rendering="auto"/><rect x="205" y="32" width="15" height="13" fill="#000"/><rect x="206" y="33" width="13" height="11" fill="#fff"/><rect x="210" y="32" width="1" height="13" fill="#000"/><rect x="215" y="32" width="1" height="13" fill="#000"/><rect x="211" y="37" width="4" height="1" fill="#000"/><rect x="211" y="40" width="4" height="1" fill="#000"/><rect x="204" y="35" width="1" height="1" fill="#000"/><rect x="204" y="38" width="1" height="1" fill="#000"/><rect x="204" y="41" width="1" height="1" fill="#000"/><rect x="206" y="45" width="1" height="1" fill="#000"/><rect x="210" y="45" width="1" height="1" fill="#000"/><rect x="214" y="45" width="1" height="1" fill="#000"/><rect x="218" y="45" width="1" height="1" fill="#000"/><rect x="229" y="31" width="15" height="13" fill="#000"/><rect x="230" y="32" width="13" height="11" fill="#fff"/><rect x="233" y="31" width="1" height="13" fill="#000"/><rect x="234" y="34" width="9" height="1" fill="#000"/><rect x="236" y="36" width="4" height="1" fill="#000"/><rect x="235" y="37" width="1" height="1" fill="#000"/><rect x="240" y="37" width="1" height="1" fill="#000"/><rect x="236" y="39" width="4" height="1" fill="#000"/><rect x="235" y="40" width="1" height="1" fill="#000"/><rect x="240" y="40" width="1" height="1" fill="#000"/><rect x="228" y="34" width="1" height="1" fill="#000"/><rect x="228" y="37" width="1" height="1" fill="#000"/><rect x="228" y="40" width="1" height="1" fill="#000"/><rect x="231" y="44" width="1" height="1" fill="#000"/><rect x="236" y="44" width="1" height="1" fill="#000"/><rect x="240" y="44" width="1" height="1" fill="#000"/><rect x="254" y="31" width="15" height="13" fill="#000"/><rect x="255" y="32" width="13" height="11" fill="#fff"/><rect x="261" y="31" width="1" height="13" fill="#000"/><rect x="254" y="37" width="15" height="1" fill="#000"/><rect x="257" y="34" width="3" height="1" fill="#000"/><rect x="256" y="35" width="1" height="1" fill="#000"/><rect x="260" y="35" width="1" height="1" fill="#000"/><rect x="257" y="40" width="3" height="1" fill="#000"/><rect x="256" y="41" width="1" height="1" fill="#000"/><rect x="260" y="41" width="1" height="1" fill="#000"/><rect x="264" y="34" width="3" height="1" fill="#000"/><rect x="263" y="35" width="1" height="1" fill="#000"/><rect x="267" y="35" width="1" height="1" fill="#000"/><rect x="264" y="40" width="3" height="1" fill="#000"/><rect x="263" y="41" width="1" height="1" fill="#000"/><rect x="267" y="41" width="1" height="1" fill="#000"/><rect x="253" y="34" width="1" height="1" fill="#000"/><rect x="253" y="37" width="1" height="1" fill="#000"/><rect x="253" y="40" width="1" height="1" fill="#000"/><rect x="256" y="44" width="1" height="1" fill="#000"/><rect x="261" y="44" width="1" height="1" fill="#000"/><rect x="265" y="44" width="1" height="1" fill="#000"/><rect x="279" y="31" width="15" height="13" fill="#000"/><rect x="280" y="32" width="13" height="11" fill="#fff"/><rect x="286" y="31" width="1" height="13" fill="#0000c0"/><rect x="279" y="37" width="15" height="1" fill="#0000c0"/><rect x="282" y="34" width="3" height="1" fill="#000"/><rect x="281" y="35" width="1" height="1" fill="#000"/><rect x="285" y="35" width="1" height="1" fill="#000"/><rect x="282" y="40" width="3" height="1" fill="#000"/><rect x="281" y="41" width="1" height="1" fill="#000"/><rect x="285" y="41" width="1" height="1" fill="#000"/><rect x="289" y="34" width="3" height="1" fill="#000"/><rect x="288" y="35" width="1" height="1" fill="#000"/><rect x="292" y="35" width="1" height="1" fill="#000"/><rect x="289" y="40" width="3" height="1" fill="#000"/><rect x="288" y="41" width="1" height="1" fill="#000"/><rect x="292" y="41" width="1" height="1" fill="#000"/><rect x="278" y="34" width="1" height="1" fill="#000"/><rect x="278" y="37" width="1" height="1" fill="#000"/><rect x="278" y="40" width="1" height="1" fill="#000"/><rect x="281" y="44" width="1" height="1" fill="#000"/><rect x="286" y="44" width="1" height="1" fill="#000"/><rect x="290" y="44" width="1" height="1" fill="#000"/><rect x="304" y="31" width="15" height="13" fill="#000"/><rect x="305" y="32" width="13" height="11" fill="#fff"/><rect x="309" y="33" width="6" height="5" fill="#000"/><rect x="310" y="34" width="4" height="3" fill="#fff"/><rect x="309" y="39" width="6" height="1" fill="#000"/><rect x="303" y="34" width="1" height="1" fill="#000"/><rect x="303" y="37" width="1" height="1" fill="#000"/><rect x="303" y="40" width="1" height="1" fill="#000"/><rect x="306" y="44" width="1" height="1" fill="#000"/><rect x="311" y="44" width="1" height="1" fill="#000"/><rect x="315" y="44" width="1" height="1" fill="#000"/><rect x="329" y="31" width="15" height="13" fill="#000"/><rect x="330" y="32" width="13" height="11" fill="#fff"/><rect x="336" y="29" width="8" height="2" fill="#c0c0c0"/><rect x="341" y="31" width="3" height="4" fill="#c0c0c0"/><path d="M335.5 36.5 L342 30 L344 32 L337.5 38.5 Z" fill="#909090" stroke="#000" stroke-width="1.3" shape-rendering="auto"/><rect x="334" y="39" width="6" height="1" fill="#000"/><rect x="328" y="34" width="1" height="1" fill="#000"/><rect x="328" y="37" width="1" height="1" fill="#000"/><rect x="328" y="40" width="1" height="1" fill="#000"/><rect x="331" y="44" width="1" height="1" fill="#000"/><rect x="336" y="44" width="1" height="1" fill="#000"/><rect x="340" y="44" width="1" height="1" fill="#000"/></svg><div class="btn" style="left:9px;top:4px;width:35px;height:21px;"></div><div class="btn" style="left:49px;top:4px;width:35px;height:21px;"></div><div class="btn" style="left:96px;top:4px;width:23px;height:21px;"></div><div class="btn" style="left:121px;top:4px;width:23px;height:21px;"></div><div class="btn" style="left:146px;top:4px;width:23px;height:21px;"></div><div class="btn" style="left:171px;top:4px;width:23px;height:21px;"></div><div class="btn" style="left:201px;top:4px;width:23px;height:21px;"></div><div class="btn prs" style="left:201px;top:27px;width:23px;height:21px;"></div><div class="btn" style="left:226px;top:4px;width:23px;height:21px;"></div><div class="btn" style="left:226px;top:27px;width:23px;height:21px;"></div><div class="btn" style="left:251px;top:4px;width:23px;height:21px;"></div><div class="btn" style="left:251px;top:27px;width:23px;height:21px;"></div><div class="btn" style="left:276px;top:4px;width:23px;height:21px;"></div><div class="btn" style="left:276px;top:27px;width:23px;height:21px;"></div><div class="btn" style="left:301px;top:4px;width:23px;height:21px;"></div><div class="btn" style="left:301px;top:27px;width:23px;height:21px;"></div><div class="btn" style="left:326px;top:4px;width:23px;height:21px;"></div><div class="btn" style="left:326px;top:27px;width:23px;height:21px;"></div><div class="btn" style="left:351px;top:4px;width:11px;height:16px;"></div><div class="btn" style="left:363px;top:4px;width:11px;height:16px;"></div><div class="sk" style="left:9px;top:30px;width:185px;height:18px;"></div><div class="t" style="left:12px;top:33px;">N=512 F=100 O=88 HAM</div><div class="sk" style="left:389px;top:4px;width:623px;height:44px;"></div><div class="t c" style="left:412px;top:30px;width:40px;">-70</div><div class="t c" style="left:449px;top:30px;width:40px;">-67</div><div class="t c" style="left:486px;top:30px;width:40px;">-64</div><div class="t c" style="left:523px;top:30px;width:40px;">-61</div><div class="t c" style="left:560px;top:30px;width:40px;">-59</div><div class="t c" style="left:597px;top:30px;width:40px;">-56</div><div class="t c" style="left:634px;top:30px;width:40px;">-54</div><div class="t c" style="left:671px;top:30px;width:40px;">-51</div><div class="t c" style="left:708px;top:30px;width:40px;">-49</div><div class="t c" style="left:745px;top:30px;width:40px;">-46</div><div class="t c" style="left:782px;top:30px;width:40px;">-44</div><div class="t c" style="left:819px;top:30px;width:40px;">-42</div><div class="t c" style="left:856px;top:30px;width:40px;">-40</div><div class="t c" style="left:893px;top:30px;width:40px;">-37</div><div class="t c" style="left:930px;top:30px;width:40px;">-33</div><div class="t" style="left:992px;top:31px;transform:none;letter-spacing:0.6px">dB</div><div class="sk" style="left:1022px;top:4px;width:76px;height:44px;"></div><div class="sk" style="left:1107px;top:4px;width:76px;height:44px;"></div><div class="sk" style="left:1192px;top:4px;width:79px;height:44px;"></div><div class="t" style="left:1196px;top:7px;">t1=</div><div class="t r" style="left:1228px;top:7px;width:40px;">0</div><div class="t" style="left:1196px;top:20px;">t2=</div><div class="t r" style="left:1228px;top:20px;width:40px;">0</div><div class="t" style="left:1196px;top:33px;">dt=</div><div class="t r" style="left:1228px;top:33px;width:40px;">0</div><div class="sk" style="left:116px;top:56px;width:628px;height:232px;"></div><div class="t r" style="left:71px;top:58px;width:40px;">200</div><div class="t r" style="left:71px;top:86px;width:40px;">150</div><div class="t r" style="left:71px;top:113px;width:40px;">100</div><div class="t r" style="left:71px;top:140px;width:40px;">50</div><div class="t r" style="left:71px;top:167px;width:40px;">0</div><div class="t r" style="left:71px;top:194px;width:40px;">-50</div><div class="t r" style="left:71px;top:221px;width:40px;">-100</div><div class="t r" style="left:71px;top:249px;width:40px;">-150</div><div class="t r" style="left:71px;top:276px;width:40px;">-200</div><div class="t" style="left:749px;top:55px;">mV</div><div class="sk" style="left:10px;top:297px;width:73px;height:259px;"></div><div class="t" style="left:11px;top:560px;transform:scaleX(0.83)">0.000-14.498</div><div class="t r" style="left:71px;top:548px;width:40px;">0</div><div class="t r" style="left:71px;top:525px;width:40px;">1</div><div class="t r" style="left:71px;top:502px;width:40px;">2</div><div class="t r" style="left:71px;top:478px;width:40px;">3</div><div class="t r" style="left:71px;top:455px;width:40px;">4</div><div class="t r" style="left:71px;top:432px;width:40px;">5</div><div class="t r" style="left:71px;top:409px;width:40px;">6</div><div class="t r" style="left:71px;top:386px;width:40px;">7</div><div class="t r" style="left:71px;top:362px;width:40px;">8</div><div class="t r" style="left:71px;top:339px;width:40px;">9</div><div class="t r" style="left:71px;top:316px;width:40px;">10</div><div class="t r" style="left:71px;top:293px;width:40px;">11</div><div class="t c" style="left:184px;top:560px;width:40px;">2</div><div class="t c" style="left:270px;top:560px;width:40px;">4</div><div class="t c" style="left:356px;top:560px;width:40px;">6</div><div class="t c" style="left:442px;top:560px;width:40px;">8</div><div class="t c" style="left:528px;top:560px;width:40px;">10</div><div class="t c" style="left:614px;top:560px;width:40px;">12</div><div class="t c" style="left:700px;top:560px;width:40px;">14</div><div class="t" style="left:748px;top:560px;">s</div></body></html>
